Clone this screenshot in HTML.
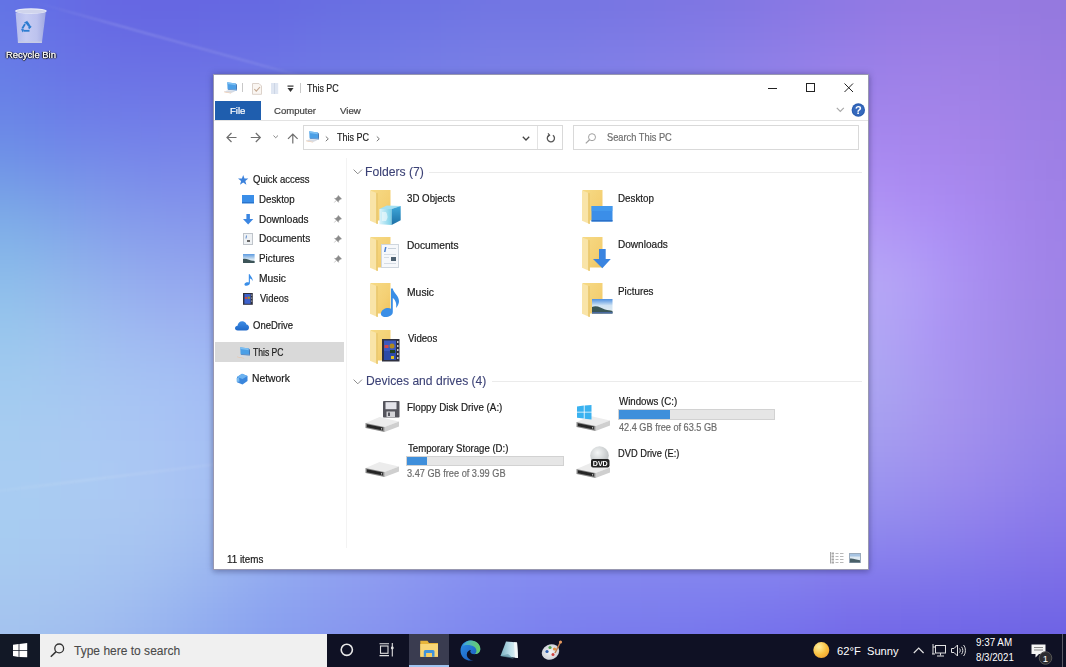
<!DOCTYPE html>
<html><head><meta charset="utf-8"><style>
html,body{margin:0;padding:0;}
body{width:1066px;height:667px;overflow:hidden;position:relative;font-family:"Liberation Sans",sans-serif;background:#8090e8;}
#bg{position:absolute;left:0;top:0;width:1066px;height:667px;overflow:hidden;}
#bgi{position:absolute;left:0;top:0;width:1066px;height:667px;filter:blur(12px);}
#bgi i{position:absolute;width:20px;height:20px;display:block;}
.t{position:absolute;white-space:pre;transform-origin:0 0;-webkit-text-stroke:0.2px currentColor;}
svg{overflow:visible;}
#root{position:absolute;left:0;top:0;width:1066px;height:667px;overflow:hidden;filter:blur(0.35px);}
</style></head><body>
<div id="root"><div id="bg"><div id="bgi"><i style="left:-60px;top:-60px;background:#6373e5"></i><i style="left:-40px;top:-60px;background:#6373e5"></i><i style="left:-20px;top:-60px;background:#6373e5"></i><i style="left:0px;top:-60px;background:#6372e5"></i><i style="left:20px;top:-60px;background:#6370e5"></i><i style="left:40px;top:-60px;background:#646de4"></i><i style="left:60px;top:-60px;background:#646be4"></i><i style="left:80px;top:-60px;background:#6569e3"></i><i style="left:100px;top:-60px;background:#6567e3"></i><i style="left:120px;top:-60px;background:#6566e2"></i><i style="left:140px;top:-60px;background:#6566e2"></i><i style="left:160px;top:-60px;background:#6566e2"></i><i style="left:180px;top:-60px;background:#6566e1"></i><i style="left:200px;top:-60px;background:#6566e1"></i><i style="left:220px;top:-60px;background:#6567e1"></i><i style="left:240px;top:-60px;background:#6568e1"></i><i style="left:260px;top:-60px;background:#6569e1"></i><i style="left:280px;top:-60px;background:#666be2"></i><i style="left:300px;top:-60px;background:#676ce2"></i><i style="left:320px;top:-60px;background:#686de2"></i><i style="left:340px;top:-60px;background:#686ee2"></i><i style="left:360px;top:-60px;background:#6a6fe2"></i><i style="left:380px;top:-60px;background:#6b70e2"></i><i style="left:400px;top:-60px;background:#6c71e2"></i><i style="left:420px;top:-60px;background:#6d72e2"></i><i style="left:440px;top:-60px;background:#6e73e2"></i><i style="left:460px;top:-60px;background:#6f74e2"></i><i style="left:480px;top:-60px;background:#7174e2"></i><i style="left:500px;top:-60px;background:#7275e3"></i><i style="left:520px;top:-60px;background:#7375e3"></i><i style="left:540px;top:-60px;background:#7475e3"></i><i style="left:560px;top:-60px;background:#7575e3"></i><i style="left:580px;top:-60px;background:#7675e3"></i><i style="left:600px;top:-60px;background:#7775e3"></i><i style="left:620px;top:-60px;background:#7975e3"></i><i style="left:640px;top:-60px;background:#7a75e3"></i><i style="left:660px;top:-60px;background:#7c75e3"></i><i style="left:680px;top:-60px;background:#7d75e3"></i><i style="left:700px;top:-60px;background:#7f76e3"></i><i style="left:720px;top:-60px;background:#8176e3"></i><i style="left:740px;top:-60px;background:#8376e3"></i><i style="left:760px;top:-60px;background:#8577e3"></i><i style="left:780px;top:-60px;background:#8777e3"></i><i style="left:800px;top:-60px;background:#8a77e3"></i><i style="left:820px;top:-60px;background:#8c78e3"></i><i style="left:840px;top:-60px;background:#8e78e3"></i><i style="left:860px;top:-60px;background:#9079e3"></i><i style="left:880px;top:-60px;background:#9179e3"></i><i style="left:900px;top:-60px;background:#9379e3"></i><i style="left:920px;top:-60px;background:#9479e2"></i><i style="left:940px;top:-60px;background:#947ae2"></i><i style="left:960px;top:-60px;background:#957ae1"></i><i style="left:980px;top:-60px;background:#9579e1"></i><i style="left:1000px;top:-60px;background:#9579e0"></i><i style="left:1020px;top:-60px;background:#9479df"></i><i style="left:1040px;top:-60px;background:#9478df"></i><i style="left:1060px;top:-60px;background:#9377de"></i><i style="left:1080px;top:-60px;background:#9377de"></i><i style="left:1100px;top:-60px;background:#9377de"></i><i style="left:1120px;top:-60px;background:#9377de"></i><i style="left:-60px;top:-40px;background:#6373e5"></i><i style="left:-40px;top:-40px;background:#6373e5"></i><i style="left:-20px;top:-40px;background:#6373e5"></i><i style="left:0px;top:-40px;background:#6372e5"></i><i style="left:20px;top:-40px;background:#6370e5"></i><i style="left:40px;top:-40px;background:#646de4"></i><i style="left:60px;top:-40px;background:#646be4"></i><i style="left:80px;top:-40px;background:#6569e3"></i><i style="left:100px;top:-40px;background:#6567e3"></i><i style="left:120px;top:-40px;background:#6566e2"></i><i style="left:140px;top:-40px;background:#6566e2"></i><i style="left:160px;top:-40px;background:#6566e2"></i><i style="left:180px;top:-40px;background:#6566e1"></i><i style="left:200px;top:-40px;background:#6566e1"></i><i style="left:220px;top:-40px;background:#6567e1"></i><i style="left:240px;top:-40px;background:#6568e1"></i><i style="left:260px;top:-40px;background:#6569e1"></i><i style="left:280px;top:-40px;background:#666be2"></i><i style="left:300px;top:-40px;background:#676ce2"></i><i style="left:320px;top:-40px;background:#686de2"></i><i style="left:340px;top:-40px;background:#686ee2"></i><i style="left:360px;top:-40px;background:#6a6fe2"></i><i style="left:380px;top:-40px;background:#6b70e2"></i><i style="left:400px;top:-40px;background:#6c71e2"></i><i style="left:420px;top:-40px;background:#6d72e2"></i><i style="left:440px;top:-40px;background:#6e73e2"></i><i style="left:460px;top:-40px;background:#6f74e2"></i><i style="left:480px;top:-40px;background:#7174e2"></i><i style="left:500px;top:-40px;background:#7275e3"></i><i style="left:520px;top:-40px;background:#7375e3"></i><i style="left:540px;top:-40px;background:#7475e3"></i><i style="left:560px;top:-40px;background:#7575e3"></i><i style="left:580px;top:-40px;background:#7675e3"></i><i style="left:600px;top:-40px;background:#7775e3"></i><i style="left:620px;top:-40px;background:#7975e3"></i><i style="left:640px;top:-40px;background:#7a75e3"></i><i style="left:660px;top:-40px;background:#7c75e3"></i><i style="left:680px;top:-40px;background:#7d75e3"></i><i style="left:700px;top:-40px;background:#7f76e3"></i><i style="left:720px;top:-40px;background:#8176e3"></i><i style="left:740px;top:-40px;background:#8376e3"></i><i style="left:760px;top:-40px;background:#8577e3"></i><i style="left:780px;top:-40px;background:#8777e3"></i><i style="left:800px;top:-40px;background:#8a77e3"></i><i style="left:820px;top:-40px;background:#8c78e3"></i><i style="left:840px;top:-40px;background:#8e78e3"></i><i style="left:860px;top:-40px;background:#9079e3"></i><i style="left:880px;top:-40px;background:#9179e3"></i><i style="left:900px;top:-40px;background:#9379e3"></i><i style="left:920px;top:-40px;background:#9479e2"></i><i style="left:940px;top:-40px;background:#947ae2"></i><i style="left:960px;top:-40px;background:#957ae1"></i><i style="left:980px;top:-40px;background:#9579e1"></i><i style="left:1000px;top:-40px;background:#9579e0"></i><i style="left:1020px;top:-40px;background:#9479df"></i><i style="left:1040px;top:-40px;background:#9478df"></i><i style="left:1060px;top:-40px;background:#9377de"></i><i style="left:1080px;top:-40px;background:#9377de"></i><i style="left:1100px;top:-40px;background:#9377de"></i><i style="left:1120px;top:-40px;background:#9377de"></i><i style="left:-60px;top:-20px;background:#6373e5"></i><i style="left:-40px;top:-20px;background:#6373e5"></i><i style="left:-20px;top:-20px;background:#6373e5"></i><i style="left:0px;top:-20px;background:#6372e5"></i><i style="left:20px;top:-20px;background:#6370e5"></i><i style="left:40px;top:-20px;background:#646de4"></i><i style="left:60px;top:-20px;background:#646be4"></i><i style="left:80px;top:-20px;background:#6569e3"></i><i style="left:100px;top:-20px;background:#6567e3"></i><i style="left:120px;top:-20px;background:#6566e2"></i><i style="left:140px;top:-20px;background:#6566e2"></i><i style="left:160px;top:-20px;background:#6566e2"></i><i style="left:180px;top:-20px;background:#6566e1"></i><i style="left:200px;top:-20px;background:#6566e1"></i><i style="left:220px;top:-20px;background:#6567e1"></i><i style="left:240px;top:-20px;background:#6568e1"></i><i style="left:260px;top:-20px;background:#6569e1"></i><i style="left:280px;top:-20px;background:#666be2"></i><i style="left:300px;top:-20px;background:#676ce2"></i><i style="left:320px;top:-20px;background:#686de2"></i><i style="left:340px;top:-20px;background:#686ee2"></i><i style="left:360px;top:-20px;background:#6a6fe2"></i><i style="left:380px;top:-20px;background:#6b70e2"></i><i style="left:400px;top:-20px;background:#6c71e2"></i><i style="left:420px;top:-20px;background:#6d72e2"></i><i style="left:440px;top:-20px;background:#6e73e2"></i><i style="left:460px;top:-20px;background:#6f74e2"></i><i style="left:480px;top:-20px;background:#7174e2"></i><i style="left:500px;top:-20px;background:#7275e3"></i><i style="left:520px;top:-20px;background:#7375e3"></i><i style="left:540px;top:-20px;background:#7475e3"></i><i style="left:560px;top:-20px;background:#7575e3"></i><i style="left:580px;top:-20px;background:#7675e3"></i><i style="left:600px;top:-20px;background:#7775e3"></i><i style="left:620px;top:-20px;background:#7975e3"></i><i style="left:640px;top:-20px;background:#7a75e3"></i><i style="left:660px;top:-20px;background:#7c75e3"></i><i style="left:680px;top:-20px;background:#7d75e3"></i><i style="left:700px;top:-20px;background:#7f76e3"></i><i style="left:720px;top:-20px;background:#8176e3"></i><i style="left:740px;top:-20px;background:#8376e3"></i><i style="left:760px;top:-20px;background:#8577e3"></i><i style="left:780px;top:-20px;background:#8777e3"></i><i style="left:800px;top:-20px;background:#8a77e3"></i><i style="left:820px;top:-20px;background:#8c78e3"></i><i style="left:840px;top:-20px;background:#8e78e3"></i><i style="left:860px;top:-20px;background:#9079e3"></i><i style="left:880px;top:-20px;background:#9179e3"></i><i style="left:900px;top:-20px;background:#9379e3"></i><i style="left:920px;top:-20px;background:#9479e2"></i><i style="left:940px;top:-20px;background:#947ae2"></i><i style="left:960px;top:-20px;background:#957ae1"></i><i style="left:980px;top:-20px;background:#9579e1"></i><i style="left:1000px;top:-20px;background:#9579e0"></i><i style="left:1020px;top:-20px;background:#9479df"></i><i style="left:1040px;top:-20px;background:#9478df"></i><i style="left:1060px;top:-20px;background:#9377de"></i><i style="left:1080px;top:-20px;background:#9377de"></i><i style="left:1100px;top:-20px;background:#9377de"></i><i style="left:1120px;top:-20px;background:#9377de"></i><i style="left:-60px;top:0px;background:#6375e6"></i><i style="left:-40px;top:0px;background:#6375e6"></i><i style="left:-20px;top:0px;background:#6375e6"></i><i style="left:0px;top:0px;background:#6373e5"></i><i style="left:20px;top:0px;background:#6471e5"></i><i style="left:40px;top:0px;background:#646ee5"></i><i style="left:60px;top:0px;background:#656ce4"></i><i style="left:80px;top:0px;background:#666ae3"></i><i style="left:100px;top:0px;background:#6669e3"></i><i style="left:120px;top:0px;background:#6668e3"></i><i style="left:140px;top:0px;background:#6667e2"></i><i style="left:160px;top:0px;background:#6667e2"></i><i style="left:180px;top:0px;background:#6667e2"></i><i style="left:200px;top:0px;background:#6668e2"></i><i style="left:220px;top:0px;background:#6669e2"></i><i style="left:240px;top:0px;background:#666ae2"></i><i style="left:260px;top:0px;background:#666be2"></i><i style="left:280px;top:0px;background:#676ce2"></i><i style="left:300px;top:0px;background:#686de2"></i><i style="left:320px;top:0px;background:#696fe2"></i><i style="left:340px;top:0px;background:#6a70e2"></i><i style="left:360px;top:0px;background:#6b71e2"></i><i style="left:380px;top:0px;background:#6c72e3"></i><i style="left:400px;top:0px;background:#6d73e3"></i><i style="left:420px;top:0px;background:#6e74e3"></i><i style="left:440px;top:0px;background:#6f75e3"></i><i style="left:460px;top:0px;background:#7175e3"></i><i style="left:480px;top:0px;background:#7276e3"></i><i style="left:500px;top:0px;background:#7376e3"></i><i style="left:520px;top:0px;background:#7476e3"></i><i style="left:540px;top:0px;background:#7576e3"></i><i style="left:560px;top:0px;background:#7676e3"></i><i style="left:580px;top:0px;background:#7776e3"></i><i style="left:600px;top:0px;background:#7876e3"></i><i style="left:620px;top:0px;background:#7a76e3"></i><i style="left:640px;top:0px;background:#7b76e3"></i><i style="left:660px;top:0px;background:#7d76e3"></i><i style="left:680px;top:0px;background:#7f77e3"></i><i style="left:700px;top:0px;background:#8077e3"></i><i style="left:720px;top:0px;background:#8277e3"></i><i style="left:740px;top:0px;background:#8477e3"></i><i style="left:760px;top:0px;background:#8678e4"></i><i style="left:780px;top:0px;background:#8978e4"></i><i style="left:800px;top:0px;background:#8b79e4"></i><i style="left:820px;top:0px;background:#8d79e4"></i><i style="left:840px;top:0px;background:#8f79e4"></i><i style="left:860px;top:0px;background:#917ae4"></i><i style="left:880px;top:0px;background:#937ae3"></i><i style="left:900px;top:0px;background:#947ae3"></i><i style="left:920px;top:0px;background:#957ae3"></i><i style="left:940px;top:0px;background:#967be2"></i><i style="left:960px;top:0px;background:#967be2"></i><i style="left:980px;top:0px;background:#967ae1"></i><i style="left:1000px;top:0px;background:#967ae1"></i><i style="left:1020px;top:0px;background:#9579e0"></i><i style="left:1040px;top:0px;background:#9579df"></i><i style="left:1060px;top:0px;background:#9478de"></i><i style="left:1080px;top:0px;background:#9478de"></i><i style="left:1100px;top:0px;background:#9478de"></i><i style="left:1120px;top:0px;background:#9478de"></i><i style="left:-60px;top:20px;background:#6477e6"></i><i style="left:-40px;top:20px;background:#6477e6"></i><i style="left:-20px;top:20px;background:#6477e6"></i><i style="left:0px;top:20px;background:#6576e6"></i><i style="left:20px;top:20px;background:#6574e6"></i><i style="left:40px;top:20px;background:#6671e5"></i><i style="left:60px;top:20px;background:#666fe5"></i><i style="left:80px;top:20px;background:#676de4"></i><i style="left:100px;top:20px;background:#676be4"></i><i style="left:120px;top:20px;background:#676ae3"></i><i style="left:140px;top:20px;background:#676ae3"></i><i style="left:160px;top:20px;background:#676ae3"></i><i style="left:180px;top:20px;background:#676ae3"></i><i style="left:200px;top:20px;background:#676be3"></i><i style="left:220px;top:20px;background:#686ce3"></i><i style="left:240px;top:20px;background:#686de3"></i><i style="left:260px;top:20px;background:#686ee3"></i><i style="left:280px;top:20px;background:#696fe3"></i><i style="left:300px;top:20px;background:#6a71e3"></i><i style="left:320px;top:20px;background:#6b72e3"></i><i style="left:340px;top:20px;background:#6c73e3"></i><i style="left:360px;top:20px;background:#6d74e3"></i><i style="left:380px;top:20px;background:#6e75e4"></i><i style="left:400px;top:20px;background:#6f76e4"></i><i style="left:420px;top:20px;background:#7077e4"></i><i style="left:440px;top:20px;background:#7278e4"></i><i style="left:460px;top:20px;background:#7378e4"></i><i style="left:480px;top:20px;background:#7479e4"></i><i style="left:500px;top:20px;background:#7579e4"></i><i style="left:520px;top:20px;background:#7679e4"></i><i style="left:540px;top:20px;background:#7779e4"></i><i style="left:560px;top:20px;background:#7879e4"></i><i style="left:580px;top:20px;background:#7a79e4"></i><i style="left:600px;top:20px;background:#7b79e4"></i><i style="left:620px;top:20px;background:#7c79e4"></i><i style="left:640px;top:20px;background:#7e79e4"></i><i style="left:660px;top:20px;background:#8079e5"></i><i style="left:680px;top:20px;background:#8179e5"></i><i style="left:700px;top:20px;background:#837ae5"></i><i style="left:720px;top:20px;background:#857ae5"></i><i style="left:740px;top:20px;background:#877ae5"></i><i style="left:760px;top:20px;background:#897ae5"></i><i style="left:780px;top:20px;background:#8c7be5"></i><i style="left:800px;top:20px;background:#8e7be5"></i><i style="left:820px;top:20px;background:#907be5"></i><i style="left:840px;top:20px;background:#927be5"></i><i style="left:860px;top:20px;background:#947ce5"></i><i style="left:880px;top:20px;background:#967ce5"></i><i style="left:900px;top:20px;background:#977ce5"></i><i style="left:920px;top:20px;background:#987ce4"></i><i style="left:940px;top:20px;background:#987ce4"></i><i style="left:960px;top:20px;background:#997ce3"></i><i style="left:980px;top:20px;background:#997ce2"></i><i style="left:1000px;top:20px;background:#987ce2"></i><i style="left:1020px;top:20px;background:#977be1"></i><i style="left:1040px;top:20px;background:#967ae0"></i><i style="left:1060px;top:20px;background:#9679df"></i><i style="left:1080px;top:20px;background:#9679df"></i><i style="left:1100px;top:20px;background:#9679df"></i><i style="left:1120px;top:20px;background:#9679df"></i><i style="left:-60px;top:40px;background:#667ae6"></i><i style="left:-40px;top:40px;background:#667ae6"></i><i style="left:-20px;top:40px;background:#667ae6"></i><i style="left:0px;top:40px;background:#6679e6"></i><i style="left:20px;top:40px;background:#6676e6"></i><i style="left:40px;top:40px;background:#6774e6"></i><i style="left:60px;top:40px;background:#6872e5"></i><i style="left:80px;top:40px;background:#6870e5"></i><i style="left:100px;top:40px;background:#696fe5"></i><i style="left:120px;top:40px;background:#696ee4"></i><i style="left:140px;top:40px;background:#696de4"></i><i style="left:160px;top:40px;background:#696de4"></i><i style="left:180px;top:40px;background:#696de4"></i><i style="left:200px;top:40px;background:#6a6ee3"></i><i style="left:220px;top:40px;background:#6a6fe4"></i><i style="left:240px;top:40px;background:#6a70e4"></i><i style="left:260px;top:40px;background:#6b71e4"></i><i style="left:280px;top:40px;background:#6b72e4"></i><i style="left:300px;top:40px;background:#6c74e4"></i><i style="left:320px;top:40px;background:#6d75e4"></i><i style="left:340px;top:40px;background:#6e76e4"></i><i style="left:360px;top:40px;background:#6f77e4"></i><i style="left:380px;top:40px;background:#7078e5"></i><i style="left:400px;top:40px;background:#7279e5"></i><i style="left:420px;top:40px;background:#737ae5"></i><i style="left:440px;top:40px;background:#747be5"></i><i style="left:460px;top:40px;background:#757be5"></i><i style="left:480px;top:40px;background:#777ce5"></i><i style="left:500px;top:40px;background:#787ce5"></i><i style="left:520px;top:40px;background:#797ce5"></i><i style="left:540px;top:40px;background:#7a7ce5"></i><i style="left:560px;top:40px;background:#7b7ce5"></i><i style="left:580px;top:40px;background:#7c7ce5"></i><i style="left:600px;top:40px;background:#7e7ce6"></i><i style="left:620px;top:40px;background:#7f7ce6"></i><i style="left:640px;top:40px;background:#817ce6"></i><i style="left:660px;top:40px;background:#827ce6"></i><i style="left:680px;top:40px;background:#847ce6"></i><i style="left:700px;top:40px;background:#867de6"></i><i style="left:720px;top:40px;background:#887de6"></i><i style="left:740px;top:40px;background:#8a7de6"></i><i style="left:760px;top:40px;background:#8c7de6"></i><i style="left:780px;top:40px;background:#8f7de6"></i><i style="left:800px;top:40px;background:#917de7"></i><i style="left:820px;top:40px;background:#937ee7"></i><i style="left:840px;top:40px;background:#957ee7"></i><i style="left:860px;top:40px;background:#977ee6"></i><i style="left:880px;top:40px;background:#997ee6"></i><i style="left:900px;top:40px;background:#9a7ee6"></i><i style="left:920px;top:40px;background:#9b7ee5"></i><i style="left:940px;top:40px;background:#9b7ee5"></i><i style="left:960px;top:40px;background:#9b7ee4"></i><i style="left:980px;top:40px;background:#9b7ee4"></i><i style="left:1000px;top:40px;background:#9a7de3"></i><i style="left:1020px;top:40px;background:#997ce2"></i><i style="left:1040px;top:40px;background:#987be1"></i><i style="left:1060px;top:40px;background:#977be0"></i><i style="left:1080px;top:40px;background:#977be0"></i><i style="left:1100px;top:40px;background:#977be0"></i><i style="left:1120px;top:40px;background:#977be0"></i><i style="left:-60px;top:60px;background:#677ee7"></i><i style="left:-40px;top:60px;background:#677ee7"></i><i style="left:-20px;top:60px;background:#677ee7"></i><i style="left:0px;top:60px;background:#677ce7"></i><i style="left:20px;top:60px;background:#677ae6"></i><i style="left:40px;top:60px;background:#6877e6"></i><i style="left:60px;top:60px;background:#6975e6"></i><i style="left:80px;top:60px;background:#6a74e6"></i><i style="left:100px;top:60px;background:#6a72e6"></i><i style="left:120px;top:60px;background:#6b72e5"></i><i style="left:140px;top:60px;background:#6b71e5"></i><i style="left:160px;top:60px;background:#6c71e5"></i><i style="left:180px;top:60px;background:#6c71e5"></i><i style="left:200px;top:60px;background:#6c72e5"></i><i style="left:220px;top:60px;background:#6c72e5"></i><i style="left:240px;top:60px;background:#6d73e5"></i><i style="left:260px;top:60px;background:#6d75e5"></i><i style="left:280px;top:60px;background:#6e76e5"></i><i style="left:300px;top:60px;background:#6f77e5"></i><i style="left:320px;top:60px;background:#7078e5"></i><i style="left:340px;top:60px;background:#7179e5"></i><i style="left:360px;top:60px;background:#727ae5"></i><i style="left:380px;top:60px;background:#737be6"></i><i style="left:400px;top:60px;background:#747ce6"></i><i style="left:420px;top:60px;background:#757de6"></i><i style="left:440px;top:60px;background:#777ee6"></i><i style="left:460px;top:60px;background:#787ee6"></i><i style="left:480px;top:60px;background:#797ee6"></i><i style="left:500px;top:60px;background:#7a7fe6"></i><i style="left:520px;top:60px;background:#7b7fe6"></i><i style="left:540px;top:60px;background:#7c7fe6"></i><i style="left:560px;top:60px;background:#7e7fe6"></i><i style="left:580px;top:60px;background:#7f7fe7"></i><i style="left:600px;top:60px;background:#807fe7"></i><i style="left:620px;top:60px;background:#827fe7"></i><i style="left:640px;top:60px;background:#847fe7"></i><i style="left:660px;top:60px;background:#867fe7"></i><i style="left:680px;top:60px;background:#877fe7"></i><i style="left:700px;top:60px;background:#8980e7"></i><i style="left:720px;top:60px;background:#8b80e8"></i><i style="left:740px;top:60px;background:#8d80e8"></i><i style="left:760px;top:60px;background:#9080e8"></i><i style="left:780px;top:60px;background:#9280e8"></i><i style="left:800px;top:60px;background:#9480e8"></i><i style="left:820px;top:60px;background:#9780e8"></i><i style="left:840px;top:60px;background:#9980e8"></i><i style="left:860px;top:60px;background:#9a80e8"></i><i style="left:880px;top:60px;background:#9c80e8"></i><i style="left:900px;top:60px;background:#9d80e7"></i><i style="left:920px;top:60px;background:#9d80e7"></i><i style="left:940px;top:60px;background:#9e80e6"></i><i style="left:960px;top:60px;background:#9d7fe5"></i><i style="left:980px;top:60px;background:#9d7fe5"></i><i style="left:1000px;top:60px;background:#9c7ee4"></i><i style="left:1020px;top:60px;background:#9b7de3"></i><i style="left:1040px;top:60px;background:#997ce2"></i><i style="left:1060px;top:60px;background:#987be1"></i><i style="left:1080px;top:60px;background:#987be1"></i><i style="left:1100px;top:60px;background:#987be1"></i><i style="left:1120px;top:60px;background:#987be1"></i><i style="left:-60px;top:80px;background:#6881e7"></i><i style="left:-40px;top:80px;background:#6881e7"></i><i style="left:-20px;top:80px;background:#6881e7"></i><i style="left:0px;top:80px;background:#6880e7"></i><i style="left:20px;top:80px;background:#697de7"></i><i style="left:40px;top:80px;background:#6a7be7"></i><i style="left:60px;top:80px;background:#6b79e7"></i><i style="left:80px;top:80px;background:#6b78e7"></i><i style="left:100px;top:80px;background:#6c77e7"></i><i style="left:120px;top:80px;background:#6d76e6"></i><i style="left:140px;top:80px;background:#6e75e6"></i><i style="left:160px;top:80px;background:#6e75e6"></i><i style="left:180px;top:80px;background:#6e75e6"></i><i style="left:200px;top:80px;background:#6f76e6"></i><i style="left:220px;top:80px;background:#6f76e6"></i><i style="left:240px;top:80px;background:#7077e6"></i><i style="left:260px;top:80px;background:#7078e6"></i><i style="left:280px;top:80px;background:#7179e6"></i><i style="left:300px;top:80px;background:#727be6"></i><i style="left:320px;top:80px;background:#737ce6"></i><i style="left:340px;top:80px;background:#747de6"></i><i style="left:360px;top:80px;background:#757ee6"></i><i style="left:380px;top:80px;background:#767ee7"></i><i style="left:400px;top:80px;background:#777fe7"></i><i style="left:420px;top:80px;background:#7880e7"></i><i style="left:440px;top:80px;background:#7981e7"></i><i style="left:460px;top:80px;background:#7a81e7"></i><i style="left:480px;top:80px;background:#7c81e7"></i><i style="left:500px;top:80px;background:#7d82e7"></i><i style="left:520px;top:80px;background:#7e82e7"></i><i style="left:540px;top:80px;background:#7f82e7"></i><i style="left:560px;top:80px;background:#8082e8"></i><i style="left:580px;top:80px;background:#8282e8"></i><i style="left:600px;top:80px;background:#8382e8"></i><i style="left:620px;top:80px;background:#8582e8"></i><i style="left:640px;top:80px;background:#8782e8"></i><i style="left:660px;top:80px;background:#8982e8"></i><i style="left:680px;top:80px;background:#8b83e9"></i><i style="left:700px;top:80px;background:#8d83e9"></i><i style="left:720px;top:80px;background:#8f83e9"></i><i style="left:740px;top:80px;background:#9183e9"></i><i style="left:760px;top:80px;background:#9383e9"></i><i style="left:780px;top:80px;background:#9683ea"></i><i style="left:800px;top:80px;background:#9883ea"></i><i style="left:820px;top:80px;background:#9a83ea"></i><i style="left:840px;top:80px;background:#9c82ea"></i><i style="left:860px;top:80px;background:#9d82ea"></i><i style="left:880px;top:80px;background:#9f82e9"></i><i style="left:900px;top:80px;background:#9f82e9"></i><i style="left:920px;top:80px;background:#a082e8"></i><i style="left:940px;top:80px;background:#a081e7"></i><i style="left:960px;top:80px;background:#9f81e7"></i><i style="left:980px;top:80px;background:#9f80e6"></i><i style="left:1000px;top:80px;background:#9d7fe5"></i><i style="left:1020px;top:80px;background:#9c7ee4"></i><i style="left:1040px;top:80px;background:#9b7de3"></i><i style="left:1060px;top:80px;background:#9a7ce2"></i><i style="left:1080px;top:80px;background:#9a7ce2"></i><i style="left:1100px;top:80px;background:#9a7ce2"></i><i style="left:1120px;top:80px;background:#9a7ce2"></i><i style="left:-60px;top:100px;background:#6a85e7"></i><i style="left:-40px;top:100px;background:#6a85e7"></i><i style="left:-20px;top:100px;background:#6a85e7"></i><i style="left:0px;top:100px;background:#6a84e7"></i><i style="left:20px;top:100px;background:#6a82e7"></i><i style="left:40px;top:100px;background:#6b80e7"></i><i style="left:60px;top:100px;background:#6c7ee7"></i><i style="left:80px;top:100px;background:#6e7de7"></i><i style="left:100px;top:100px;background:#6f7be7"></i><i style="left:120px;top:100px;background:#6f7be8"></i><i style="left:140px;top:100px;background:#707ae7"></i><i style="left:160px;top:100px;background:#717ae7"></i><i style="left:180px;top:100px;background:#717ae7"></i><i style="left:200px;top:100px;background:#727ae7"></i><i style="left:220px;top:100px;background:#727be7"></i><i style="left:240px;top:100px;background:#737be7"></i><i style="left:260px;top:100px;background:#737ce7"></i><i style="left:280px;top:100px;background:#747de7"></i><i style="left:300px;top:100px;background:#757ee7"></i><i style="left:320px;top:100px;background:#767fe7"></i><i style="left:340px;top:100px;background:#7780e7"></i><i style="left:360px;top:100px;background:#7881e7"></i><i style="left:380px;top:100px;background:#7982e8"></i><i style="left:400px;top:100px;background:#7a82e8"></i><i style="left:420px;top:100px;background:#7b83e8"></i><i style="left:440px;top:100px;background:#7c84e8"></i><i style="left:460px;top:100px;background:#7d84e8"></i><i style="left:480px;top:100px;background:#7e84e8"></i><i style="left:500px;top:100px;background:#7f85e8"></i><i style="left:520px;top:100px;background:#8185e8"></i><i style="left:540px;top:100px;background:#8285e9"></i><i style="left:560px;top:100px;background:#8385e9"></i><i style="left:580px;top:100px;background:#8585e9"></i><i style="left:600px;top:100px;background:#8685e9"></i><i style="left:620px;top:100px;background:#8885e9"></i><i style="left:640px;top:100px;background:#8a86e9"></i><i style="left:660px;top:100px;background:#8c86ea"></i><i style="left:680px;top:100px;background:#8e86ea"></i><i style="left:700px;top:100px;background:#9086ea"></i><i style="left:720px;top:100px;background:#9286eb"></i><i style="left:740px;top:100px;background:#9586eb"></i><i style="left:760px;top:100px;background:#9786eb"></i><i style="left:780px;top:100px;background:#9986eb"></i><i style="left:800px;top:100px;background:#9b86ec"></i><i style="left:820px;top:100px;background:#9d85ec"></i><i style="left:840px;top:100px;background:#9f85ec"></i><i style="left:860px;top:100px;background:#a184eb"></i><i style="left:880px;top:100px;background:#a184eb"></i><i style="left:900px;top:100px;background:#a283ea"></i><i style="left:920px;top:100px;background:#a283e9"></i><i style="left:940px;top:100px;background:#a283e9"></i><i style="left:960px;top:100px;background:#a182e8"></i><i style="left:980px;top:100px;background:#a081e7"></i><i style="left:1000px;top:100px;background:#9f80e6"></i><i style="left:1020px;top:100px;background:#9d7fe5"></i><i style="left:1040px;top:100px;background:#9c7ee4"></i><i style="left:1060px;top:100px;background:#9b7de3"></i><i style="left:1080px;top:100px;background:#9b7de3"></i><i style="left:1100px;top:100px;background:#9b7de3"></i><i style="left:1120px;top:100px;background:#9b7de3"></i><i style="left:-60px;top:120px;background:#6c8ae7"></i><i style="left:-40px;top:120px;background:#6c8ae7"></i><i style="left:-20px;top:120px;background:#6c8ae7"></i><i style="left:0px;top:120px;background:#6c89e7"></i><i style="left:20px;top:120px;background:#6c87e7"></i><i style="left:40px;top:120px;background:#6d85e8"></i><i style="left:60px;top:120px;background:#6f83e8"></i><i style="left:80px;top:120px;background:#7082e8"></i><i style="left:100px;top:120px;background:#7181e8"></i><i style="left:120px;top:120px;background:#7280e8"></i><i style="left:140px;top:120px;background:#737fe9"></i><i style="left:160px;top:120px;background:#747fe8"></i><i style="left:180px;top:120px;background:#747fe8"></i><i style="left:200px;top:120px;background:#757fe8"></i><i style="left:220px;top:120px;background:#767fe8"></i><i style="left:240px;top:120px;background:#7680e8"></i><i style="left:260px;top:120px;background:#7781e8"></i><i style="left:280px;top:120px;background:#7781e8"></i><i style="left:300px;top:120px;background:#7882e8"></i><i style="left:320px;top:120px;background:#7983e8"></i><i style="left:340px;top:120px;background:#7a84e8"></i><i style="left:360px;top:120px;background:#7a84e8"></i><i style="left:380px;top:120px;background:#7b85e9"></i><i style="left:400px;top:120px;background:#7c86e9"></i><i style="left:420px;top:120px;background:#7e86e9"></i><i style="left:440px;top:120px;background:#7f87e9"></i><i style="left:460px;top:120px;background:#8087e9"></i><i style="left:480px;top:120px;background:#8187e9"></i><i style="left:500px;top:120px;background:#8288e9"></i><i style="left:520px;top:120px;background:#8388e9"></i><i style="left:540px;top:120px;background:#8588ea"></i><i style="left:560px;top:120px;background:#8688ea"></i><i style="left:580px;top:120px;background:#8888ea"></i><i style="left:600px;top:120px;background:#8989ea"></i><i style="left:620px;top:120px;background:#8b89ea"></i><i style="left:640px;top:120px;background:#8d89eb"></i><i style="left:660px;top:120px;background:#8f89eb"></i><i style="left:680px;top:120px;background:#918aeb"></i><i style="left:700px;top:120px;background:#948aec"></i><i style="left:720px;top:120px;background:#968aec"></i><i style="left:740px;top:120px;background:#988aec"></i><i style="left:760px;top:120px;background:#9b8aed"></i><i style="left:780px;top:120px;background:#9d8aed"></i><i style="left:800px;top:120px;background:#9f89ed"></i><i style="left:820px;top:120px;background:#a188ed"></i><i style="left:840px;top:120px;background:#a288ed"></i><i style="left:860px;top:120px;background:#a487ed"></i><i style="left:880px;top:120px;background:#a486ed"></i><i style="left:900px;top:120px;background:#a585ec"></i><i style="left:920px;top:120px;background:#a485eb"></i><i style="left:940px;top:120px;background:#a484ea"></i><i style="left:960px;top:120px;background:#a383e9"></i><i style="left:980px;top:120px;background:#a282e8"></i><i style="left:1000px;top:120px;background:#a081e7"></i><i style="left:1020px;top:120px;background:#9e80e6"></i><i style="left:1040px;top:120px;background:#9d7fe5"></i><i style="left:1060px;top:120px;background:#9b7ee4"></i><i style="left:1080px;top:120px;background:#9b7ee4"></i><i style="left:1100px;top:120px;background:#9b7ee4"></i><i style="left:1120px;top:120px;background:#9b7ee4"></i><i style="left:-60px;top:140px;background:#6e90e7"></i><i style="left:-40px;top:140px;background:#6e90e7"></i><i style="left:-20px;top:140px;background:#6e90e7"></i><i style="left:0px;top:140px;background:#6e8fe7"></i><i style="left:20px;top:140px;background:#6f8de8"></i><i style="left:40px;top:140px;background:#708be8"></i><i style="left:60px;top:140px;background:#7289e8"></i><i style="left:80px;top:140px;background:#7388e8"></i><i style="left:100px;top:140px;background:#7487e9"></i><i style="left:120px;top:140px;background:#7685e9"></i><i style="left:140px;top:140px;background:#7685e9"></i><i style="left:160px;top:140px;background:#7784e9"></i><i style="left:180px;top:140px;background:#7884e9"></i><i style="left:200px;top:140px;background:#7884e9"></i><i style="left:220px;top:140px;background:#7984e9"></i><i style="left:240px;top:140px;background:#7a84e9"></i><i style="left:260px;top:140px;background:#7a85e9"></i><i style="left:280px;top:140px;background:#7b85e9"></i><i style="left:300px;top:140px;background:#7b86e9"></i><i style="left:320px;top:140px;background:#7c87e9"></i><i style="left:340px;top:140px;background:#7d87e9"></i><i style="left:360px;top:140px;background:#7e88e9"></i><i style="left:380px;top:140px;background:#7e88ea"></i><i style="left:400px;top:140px;background:#7f89ea"></i><i style="left:420px;top:140px;background:#8089ea"></i><i style="left:440px;top:140px;background:#818aea"></i><i style="left:460px;top:140px;background:#828aea"></i><i style="left:480px;top:140px;background:#848aea"></i><i style="left:500px;top:140px;background:#858bea"></i><i style="left:520px;top:140px;background:#868beb"></i><i style="left:540px;top:140px;background:#878beb"></i><i style="left:560px;top:140px;background:#898beb"></i><i style="left:580px;top:140px;background:#8b8ceb"></i><i style="left:600px;top:140px;background:#8c8ceb"></i><i style="left:620px;top:140px;background:#8e8cec"></i><i style="left:640px;top:140px;background:#908dec"></i><i style="left:660px;top:140px;background:#928dec"></i><i style="left:680px;top:140px;background:#958ded"></i><i style="left:700px;top:140px;background:#978ded"></i><i style="left:720px;top:140px;background:#998eed"></i><i style="left:740px;top:140px;background:#9c8eee"></i><i style="left:760px;top:140px;background:#9e8dee"></i><i style="left:780px;top:140px;background:#a08def"></i><i style="left:800px;top:140px;background:#a28def"></i><i style="left:820px;top:140px;background:#a48cef"></i><i style="left:840px;top:140px;background:#a68bef"></i><i style="left:860px;top:140px;background:#a789ef"></i><i style="left:880px;top:140px;background:#a788ef"></i><i style="left:900px;top:140px;background:#a787ee"></i><i style="left:920px;top:140px;background:#a686ed"></i><i style="left:940px;top:140px;background:#a685ec"></i><i style="left:960px;top:140px;background:#a484ea"></i><i style="left:980px;top:140px;background:#a383e9"></i><i style="left:1000px;top:140px;background:#a182e8"></i><i style="left:1020px;top:140px;background:#9f81e7"></i><i style="left:1040px;top:140px;background:#9e80e5"></i><i style="left:1060px;top:140px;background:#9c7ee4"></i><i style="left:1080px;top:140px;background:#9c7ee4"></i><i style="left:1100px;top:140px;background:#9c7ee4"></i><i style="left:1120px;top:140px;background:#9c7ee4"></i><i style="left:-60px;top:160px;background:#7298e7"></i><i style="left:-40px;top:160px;background:#7298e7"></i><i style="left:-20px;top:160px;background:#7298e7"></i><i style="left:0px;top:160px;background:#7296e7"></i><i style="left:20px;top:160px;background:#7394e8"></i><i style="left:40px;top:160px;background:#7492e8"></i><i style="left:60px;top:160px;background:#7590e8"></i><i style="left:80px;top:160px;background:#778fe9"></i><i style="left:100px;top:160px;background:#788de9"></i><i style="left:120px;top:160px;background:#798cea"></i><i style="left:140px;top:160px;background:#7a8aea"></i><i style="left:160px;top:160px;background:#7b8aea"></i><i style="left:180px;top:160px;background:#7b89ea"></i><i style="left:200px;top:160px;background:#7c89ea"></i><i style="left:220px;top:160px;background:#7d89ea"></i><i style="left:240px;top:160px;background:#7d89ea"></i><i style="left:260px;top:160px;background:#7e89ea"></i><i style="left:280px;top:160px;background:#7e8aea"></i><i style="left:300px;top:160px;background:#7f8aea"></i><i style="left:320px;top:160px;background:#7f8bea"></i><i style="left:340px;top:160px;background:#808bea"></i><i style="left:360px;top:160px;background:#818bea"></i><i style="left:380px;top:160px;background:#818ceb"></i><i style="left:400px;top:160px;background:#828ceb"></i><i style="left:420px;top:160px;background:#838ceb"></i><i style="left:440px;top:160px;background:#848deb"></i><i style="left:460px;top:160px;background:#858deb"></i><i style="left:480px;top:160px;background:#868deb"></i><i style="left:500px;top:160px;background:#878eeb"></i><i style="left:520px;top:160px;background:#898eeb"></i><i style="left:540px;top:160px;background:#8a8eec"></i><i style="left:560px;top:160px;background:#8c8eec"></i><i style="left:580px;top:160px;background:#8d8fec"></i><i style="left:600px;top:160px;background:#8f8fec"></i><i style="left:620px;top:160px;background:#918fed"></i><i style="left:640px;top:160px;background:#9390ed"></i><i style="left:660px;top:160px;background:#9590ed"></i><i style="left:680px;top:160px;background:#9891ee"></i><i style="left:700px;top:160px;background:#9a91ee"></i><i style="left:720px;top:160px;background:#9d91ef"></i><i style="left:740px;top:160px;background:#9f91ef"></i><i style="left:760px;top:160px;background:#a191f0"></i><i style="left:780px;top:160px;background:#a491f0"></i><i style="left:800px;top:160px;background:#a690f0"></i><i style="left:820px;top:160px;background:#a78ff1"></i><i style="left:840px;top:160px;background:#a98ef1"></i><i style="left:860px;top:160px;background:#aa8cf1"></i><i style="left:880px;top:160px;background:#aa8bf1"></i><i style="left:900px;top:160px;background:#a989f0"></i><i style="left:920px;top:160px;background:#a888ef"></i><i style="left:940px;top:160px;background:#a787ee"></i><i style="left:960px;top:160px;background:#a686ec"></i><i style="left:980px;top:160px;background:#a485eb"></i><i style="left:1000px;top:160px;background:#a283e9"></i><i style="left:1020px;top:160px;background:#a082e8"></i><i style="left:1040px;top:160px;background:#9e80e6"></i><i style="left:1060px;top:160px;background:#9d7fe5"></i><i style="left:1080px;top:160px;background:#9d7fe5"></i><i style="left:1100px;top:160px;background:#9d7fe5"></i><i style="left:1120px;top:160px;background:#9d7fe5"></i><i style="left:-60px;top:180px;background:#769fe7"></i><i style="left:-40px;top:180px;background:#769fe7"></i><i style="left:-20px;top:180px;background:#769fe7"></i><i style="left:0px;top:180px;background:#769ee7"></i><i style="left:20px;top:180px;background:#779ce8"></i><i style="left:40px;top:180px;background:#789ae8"></i><i style="left:60px;top:180px;background:#7998e9"></i><i style="left:80px;top:180px;background:#7b96e9"></i><i style="left:100px;top:180px;background:#7c94ea"></i><i style="left:120px;top:180px;background:#7d92ea"></i><i style="left:140px;top:180px;background:#7e90ea"></i><i style="left:160px;top:180px;background:#7f8feb"></i><i style="left:180px;top:180px;background:#7f8feb"></i><i style="left:200px;top:180px;background:#808eeb"></i><i style="left:220px;top:180px;background:#808eeb"></i><i style="left:240px;top:180px;background:#818eeb"></i><i style="left:260px;top:180px;background:#818eeb"></i><i style="left:280px;top:180px;background:#828eeb"></i><i style="left:300px;top:180px;background:#828eeb"></i><i style="left:320px;top:180px;background:#838eeb"></i><i style="left:340px;top:180px;background:#838feb"></i><i style="left:360px;top:180px;background:#848feb"></i><i style="left:380px;top:180px;background:#848feb"></i><i style="left:400px;top:180px;background:#858fec"></i><i style="left:420px;top:180px;background:#8690ec"></i><i style="left:440px;top:180px;background:#8790ec"></i><i style="left:460px;top:180px;background:#8890ec"></i><i style="left:480px;top:180px;background:#8990ec"></i><i style="left:500px;top:180px;background:#8a90ec"></i><i style="left:520px;top:180px;background:#8b91ec"></i><i style="left:540px;top:180px;background:#8d91ed"></i><i style="left:560px;top:180px;background:#8e91ed"></i><i style="left:580px;top:180px;background:#9092ed"></i><i style="left:600px;top:180px;background:#9292ed"></i><i style="left:620px;top:180px;background:#9493ee"></i><i style="left:640px;top:180px;background:#9693ee"></i><i style="left:660px;top:180px;background:#9894ee"></i><i style="left:680px;top:180px;background:#9b94ef"></i><i style="left:700px;top:180px;background:#9d95ef"></i><i style="left:720px;top:180px;background:#9f95f0"></i><i style="left:740px;top:180px;background:#a295f0"></i><i style="left:760px;top:180px;background:#a495f1"></i><i style="left:780px;top:180px;background:#a795f1"></i><i style="left:800px;top:180px;background:#a994f2"></i><i style="left:820px;top:180px;background:#aa93f2"></i><i style="left:840px;top:180px;background:#ac92f3"></i><i style="left:860px;top:180px;background:#ac90f3"></i><i style="left:880px;top:180px;background:#ac8ef3"></i><i style="left:900px;top:180px;background:#ab8cf2"></i><i style="left:920px;top:180px;background:#aa8bf1"></i><i style="left:940px;top:180px;background:#a889f0"></i><i style="left:960px;top:180px;background:#a787ee"></i><i style="left:980px;top:180px;background:#a586ec"></i><i style="left:1000px;top:180px;background:#a384ea"></i><i style="left:1020px;top:180px;background:#a183e9"></i><i style="left:1040px;top:180px;background:#9f81e7"></i><i style="left:1060px;top:180px;background:#9e80e6"></i><i style="left:1080px;top:180px;background:#9e80e6"></i><i style="left:1100px;top:180px;background:#9e80e6"></i><i style="left:1120px;top:180px;background:#9e80e6"></i><i style="left:-60px;top:200px;background:#7aa7e7"></i><i style="left:-40px;top:200px;background:#7aa7e7"></i><i style="left:-20px;top:200px;background:#7aa7e7"></i><i style="left:0px;top:200px;background:#7ba7e7"></i><i style="left:20px;top:200px;background:#7ca4e8"></i><i style="left:40px;top:200px;background:#7da2e8"></i><i style="left:60px;top:200px;background:#7e9fe9"></i><i style="left:80px;top:200px;background:#809dea"></i><i style="left:100px;top:200px;background:#819aea"></i><i style="left:120px;top:200px;background:#8298eb"></i><i style="left:140px;top:200px;background:#8397eb"></i><i style="left:160px;top:200px;background:#8395eb"></i><i style="left:180px;top:200px;background:#8494eb"></i><i style="left:200px;top:200px;background:#8494eb"></i><i style="left:220px;top:200px;background:#8493ec"></i><i style="left:240px;top:200px;background:#8593ec"></i><i style="left:260px;top:200px;background:#8593ec"></i><i style="left:280px;top:200px;background:#8592ec"></i><i style="left:300px;top:200px;background:#8592ec"></i><i style="left:320px;top:200px;background:#8692ec"></i><i style="left:340px;top:200px;background:#8692ec"></i><i style="left:360px;top:200px;background:#8792ec"></i><i style="left:380px;top:200px;background:#8792ec"></i><i style="left:400px;top:200px;background:#8892ed"></i><i style="left:420px;top:200px;background:#8893ed"></i><i style="left:440px;top:200px;background:#8993ed"></i><i style="left:460px;top:200px;background:#8a93ed"></i><i style="left:480px;top:200px;background:#8b93ed"></i><i style="left:500px;top:200px;background:#8c93ed"></i><i style="left:520px;top:200px;background:#8e93ed"></i><i style="left:540px;top:200px;background:#8f94ee"></i><i style="left:560px;top:200px;background:#9194ee"></i><i style="left:580px;top:200px;background:#9295ee"></i><i style="left:600px;top:200px;background:#9495ee"></i><i style="left:620px;top:200px;background:#9696ef"></i><i style="left:640px;top:200px;background:#9896ef"></i><i style="left:660px;top:200px;background:#9b97ef"></i><i style="left:680px;top:200px;background:#9d97f0"></i><i style="left:700px;top:200px;background:#a098f0"></i><i style="left:720px;top:200px;background:#a299f1"></i><i style="left:740px;top:200px;background:#a599f1"></i><i style="left:760px;top:200px;background:#a799f2"></i><i style="left:780px;top:200px;background:#a999f2"></i><i style="left:800px;top:200px;background:#ab98f3"></i><i style="left:820px;top:200px;background:#ad98f3"></i><i style="left:840px;top:200px;background:#ae96f4"></i><i style="left:860px;top:200px;background:#af94f4"></i><i style="left:880px;top:200px;background:#af92f4"></i><i style="left:900px;top:200px;background:#ad90f4"></i><i style="left:920px;top:200px;background:#ac8df3"></i><i style="left:940px;top:200px;background:#aa8bf2"></i><i style="left:960px;top:200px;background:#a889f0"></i><i style="left:980px;top:200px;background:#a687ee"></i><i style="left:1000px;top:200px;background:#a485eb"></i><i style="left:1020px;top:200px;background:#a283e9"></i><i style="left:1040px;top:200px;background:#a082e8"></i><i style="left:1060px;top:200px;background:#9e80e6"></i><i style="left:1080px;top:200px;background:#9e80e6"></i><i style="left:1100px;top:200px;background:#9e80e6"></i><i style="left:1120px;top:200px;background:#9e80e6"></i><i style="left:-60px;top:220px;background:#7faee8"></i><i style="left:-40px;top:220px;background:#7faee8"></i><i style="left:-20px;top:220px;background:#7faee8"></i><i style="left:0px;top:220px;background:#80aee8"></i><i style="left:20px;top:220px;background:#81ace8"></i><i style="left:40px;top:220px;background:#82a9e9"></i><i style="left:60px;top:220px;background:#83a6ea"></i><i style="left:80px;top:220px;background:#85a3ea"></i><i style="left:100px;top:220px;background:#86a1eb"></i><i style="left:120px;top:220px;background:#879eeb"></i><i style="left:140px;top:220px;background:#879dec"></i><i style="left:160px;top:220px;background:#889bec"></i><i style="left:180px;top:220px;background:#889aec"></i><i style="left:200px;top:220px;background:#8899ec"></i><i style="left:220px;top:220px;background:#8898ed"></i><i style="left:240px;top:220px;background:#8998ed"></i><i style="left:260px;top:220px;background:#8997ed"></i><i style="left:280px;top:220px;background:#8997ed"></i><i style="left:300px;top:220px;background:#8996ed"></i><i style="left:320px;top:220px;background:#8996ed"></i><i style="left:340px;top:220px;background:#8996ed"></i><i style="left:360px;top:220px;background:#8996ed"></i><i style="left:380px;top:220px;background:#8a96ed"></i><i style="left:400px;top:220px;background:#8a96ed"></i><i style="left:420px;top:220px;background:#8b95ed"></i><i style="left:440px;top:220px;background:#8c95ee"></i><i style="left:460px;top:220px;background:#8c95ee"></i><i style="left:480px;top:220px;background:#8d96ee"></i><i style="left:500px;top:220px;background:#8f96ee"></i><i style="left:520px;top:220px;background:#9096ee"></i><i style="left:540px;top:220px;background:#9196ee"></i><i style="left:560px;top:220px;background:#9397ef"></i><i style="left:580px;top:220px;background:#9497ef"></i><i style="left:600px;top:220px;background:#9698ef"></i><i style="left:620px;top:220px;background:#9898ef"></i><i style="left:640px;top:220px;background:#9a99f0"></i><i style="left:660px;top:220px;background:#9d9af0"></i><i style="left:680px;top:220px;background:#9f9af1"></i><i style="left:700px;top:220px;background:#a29bf1"></i><i style="left:720px;top:220px;background:#a49cf2"></i><i style="left:740px;top:220px;background:#a79cf2"></i><i style="left:760px;top:220px;background:#a99df3"></i><i style="left:780px;top:220px;background:#ac9df3"></i><i style="left:800px;top:220px;background:#ae9df4"></i><i style="left:820px;top:220px;background:#af9cf4"></i><i style="left:840px;top:220px;background:#b19bf5"></i><i style="left:860px;top:220px;background:#b199f5"></i><i style="left:880px;top:220px;background:#b197f5"></i><i style="left:900px;top:220px;background:#af94f5"></i><i style="left:920px;top:220px;background:#ad91f5"></i><i style="left:940px;top:220px;background:#ab8ef3"></i><i style="left:960px;top:220px;background:#a88bf1"></i><i style="left:980px;top:220px;background:#a689ee"></i><i style="left:1000px;top:220px;background:#a486ec"></i><i style="left:1020px;top:220px;background:#a284ea"></i><i style="left:1040px;top:220px;background:#a082e8"></i><i style="left:1060px;top:220px;background:#9e81e7"></i><i style="left:1080px;top:220px;background:#9e81e7"></i><i style="left:1100px;top:220px;background:#9e81e7"></i><i style="left:1120px;top:220px;background:#9e81e7"></i><i style="left:-60px;top:240px;background:#85b5e8"></i><i style="left:-40px;top:240px;background:#85b5e8"></i><i style="left:-20px;top:240px;background:#85b5e8"></i><i style="left:0px;top:240px;background:#85b4e9"></i><i style="left:20px;top:240px;background:#86b2e9"></i><i style="left:40px;top:240px;background:#87b0ea"></i><i style="left:60px;top:240px;background:#89adea"></i><i style="left:80px;top:240px;background:#8aaaeb"></i><i style="left:100px;top:240px;background:#8ba7ec"></i><i style="left:120px;top:240px;background:#8ca4ec"></i><i style="left:140px;top:240px;background:#8ca2ed"></i><i style="left:160px;top:240px;background:#8da1ed"></i><i style="left:180px;top:240px;background:#8d9fed"></i><i style="left:200px;top:240px;background:#8d9eed"></i><i style="left:220px;top:240px;background:#8d9dee"></i><i style="left:240px;top:240px;background:#8c9cee"></i><i style="left:260px;top:240px;background:#8c9cee"></i><i style="left:280px;top:240px;background:#8c9bee"></i><i style="left:300px;top:240px;background:#8c9bee"></i><i style="left:320px;top:240px;background:#8c9aee"></i><i style="left:340px;top:240px;background:#8c99ee"></i><i style="left:360px;top:240px;background:#8c99ee"></i><i style="left:380px;top:240px;background:#8c99ee"></i><i style="left:400px;top:240px;background:#8d98ee"></i><i style="left:420px;top:240px;background:#8d98ee"></i><i style="left:440px;top:240px;background:#8e98ee"></i><i style="left:460px;top:240px;background:#8f98ee"></i><i style="left:480px;top:240px;background:#8f98ef"></i><i style="left:500px;top:240px;background:#9098ef"></i><i style="left:520px;top:240px;background:#9298ef"></i><i style="left:540px;top:240px;background:#9399ef"></i><i style="left:560px;top:240px;background:#9599ef"></i><i style="left:580px;top:240px;background:#969af0"></i><i style="left:600px;top:240px;background:#989af0"></i><i style="left:620px;top:240px;background:#9a9bf0"></i><i style="left:640px;top:240px;background:#9c9cf1"></i><i style="left:660px;top:240px;background:#9f9cf1"></i><i style="left:680px;top:240px;background:#a19df1"></i><i style="left:700px;top:240px;background:#a39ef2"></i><i style="left:720px;top:240px;background:#a69ff2"></i><i style="left:740px;top:240px;background:#a8a0f3"></i><i style="left:760px;top:240px;background:#aba0f3"></i><i style="left:780px;top:240px;background:#ada1f4"></i><i style="left:800px;top:240px;background:#afa1f4"></i><i style="left:820px;top:240px;background:#b1a0f5"></i><i style="left:840px;top:240px;background:#b2a0f5"></i><i style="left:860px;top:240px;background:#b39ff6"></i><i style="left:880px;top:240px;background:#b29cf6"></i><i style="left:900px;top:240px;background:#b199f6"></i><i style="left:920px;top:240px;background:#ae95f6"></i><i style="left:940px;top:240px;background:#ab91f4"></i><i style="left:960px;top:240px;background:#a98df1"></i><i style="left:980px;top:240px;background:#a78aef"></i><i style="left:1000px;top:240px;background:#a488ec"></i><i style="left:1020px;top:240px;background:#a285ea"></i><i style="left:1040px;top:240px;background:#a083e8"></i><i style="left:1060px;top:240px;background:#9f82e7"></i><i style="left:1080px;top:240px;background:#9f82e7"></i><i style="left:1100px;top:240px;background:#9f82e7"></i><i style="left:1120px;top:240px;background:#9f82e7"></i><i style="left:-60px;top:260px;background:#8abae9"></i><i style="left:-40px;top:260px;background:#8abae9"></i><i style="left:-20px;top:260px;background:#8abae9"></i><i style="left:0px;top:260px;background:#8ab9ea"></i><i style="left:20px;top:260px;background:#8bb8ea"></i><i style="left:40px;top:260px;background:#8db5eb"></i><i style="left:60px;top:260px;background:#8eb2eb"></i><i style="left:80px;top:260px;background:#8fafec"></i><i style="left:100px;top:260px;background:#90aded"></i><i style="left:120px;top:260px;background:#91aaed"></i><i style="left:140px;top:260px;background:#91a8ee"></i><i style="left:160px;top:260px;background:#91a6ee"></i><i style="left:180px;top:260px;background:#91a5ee"></i><i style="left:200px;top:260px;background:#91a3ee"></i><i style="left:220px;top:260px;background:#91a2ef"></i><i style="left:240px;top:260px;background:#90a1ef"></i><i style="left:260px;top:260px;background:#90a0ef"></i><i style="left:280px;top:260px;background:#909fef"></i><i style="left:300px;top:260px;background:#8f9eef"></i><i style="left:320px;top:260px;background:#8f9eef"></i><i style="left:340px;top:260px;background:#8f9def"></i><i style="left:360px;top:260px;background:#8f9cef"></i><i style="left:380px;top:260px;background:#8f9cef"></i><i style="left:400px;top:260px;background:#8f9bef"></i><i style="left:420px;top:260px;background:#8f9bef"></i><i style="left:440px;top:260px;background:#909aef"></i><i style="left:460px;top:260px;background:#909aef"></i><i style="left:480px;top:260px;background:#919aef"></i><i style="left:500px;top:260px;background:#929aef"></i><i style="left:520px;top:260px;background:#939af0"></i><i style="left:540px;top:260px;background:#959bf0"></i><i style="left:560px;top:260px;background:#969bf0"></i><i style="left:580px;top:260px;background:#989cf0"></i><i style="left:600px;top:260px;background:#9a9cf0"></i><i style="left:620px;top:260px;background:#9b9df1"></i><i style="left:640px;top:260px;background:#9e9ef1"></i><i style="left:660px;top:260px;background:#a09ff1"></i><i style="left:680px;top:260px;background:#a2a0f2"></i><i style="left:700px;top:260px;background:#a5a1f2"></i><i style="left:720px;top:260px;background:#a7a1f3"></i><i style="left:740px;top:260px;background:#aaa2f3"></i><i style="left:760px;top:260px;background:#aca3f4"></i><i style="left:780px;top:260px;background:#aea4f4"></i><i style="left:800px;top:260px;background:#b0a4f5"></i><i style="left:820px;top:260px;background:#b2a4f5"></i><i style="left:840px;top:260px;background:#b3a4f5"></i><i style="left:860px;top:260px;background:#b4a3f6"></i><i style="left:880px;top:260px;background:#b4a1f6"></i><i style="left:900px;top:260px;background:#b29df6"></i><i style="left:920px;top:260px;background:#af98f5"></i><i style="left:940px;top:260px;background:#ac93f4"></i><i style="left:960px;top:260px;background:#a98ff1"></i><i style="left:980px;top:260px;background:#a78bef"></i><i style="left:1000px;top:260px;background:#a489ec"></i><i style="left:1020px;top:260px;background:#a286ea"></i><i style="left:1040px;top:260px;background:#a084e8"></i><i style="left:1060px;top:260px;background:#9e82e7"></i><i style="left:1080px;top:260px;background:#9e82e7"></i><i style="left:1100px;top:260px;background:#9e82e7"></i><i style="left:1120px;top:260px;background:#9e82e7"></i><i style="left:-60px;top:280px;background:#8fbfeb"></i><i style="left:-40px;top:280px;background:#8fbfeb"></i><i style="left:-20px;top:280px;background:#8fbfeb"></i><i style="left:0px;top:280px;background:#8fbeeb"></i><i style="left:20px;top:280px;background:#91bceb"></i><i style="left:40px;top:280px;background:#92baec"></i><i style="left:60px;top:280px;background:#93b8ec"></i><i style="left:80px;top:280px;background:#94b5ed"></i><i style="left:100px;top:280px;background:#95b2ee"></i><i style="left:120px;top:280px;background:#96afee"></i><i style="left:140px;top:280px;background:#96adef"></i><i style="left:160px;top:280px;background:#96abef"></i><i style="left:180px;top:280px;background:#96aaef"></i><i style="left:200px;top:280px;background:#95a8f0"></i><i style="left:220px;top:280px;background:#94a7f0"></i><i style="left:240px;top:280px;background:#94a6f0"></i><i style="left:260px;top:280px;background:#93a4f0"></i><i style="left:280px;top:280px;background:#93a3f0"></i><i style="left:300px;top:280px;background:#92a2f0"></i><i style="left:320px;top:280px;background:#92a1f0"></i><i style="left:340px;top:280px;background:#91a0f0"></i><i style="left:360px;top:280px;background:#919ff0"></i><i style="left:380px;top:280px;background:#919ef0"></i><i style="left:400px;top:280px;background:#919ef0"></i><i style="left:420px;top:280px;background:#919df0"></i><i style="left:440px;top:280px;background:#929cf0"></i><i style="left:460px;top:280px;background:#929cf0"></i><i style="left:480px;top:280px;background:#939cf0"></i><i style="left:500px;top:280px;background:#949cf0"></i><i style="left:520px;top:280px;background:#959cf0"></i><i style="left:540px;top:280px;background:#969cf0"></i><i style="left:560px;top:280px;background:#979df0"></i><i style="left:580px;top:280px;background:#999df1"></i><i style="left:600px;top:280px;background:#9b9ef1"></i><i style="left:620px;top:280px;background:#9c9ff1"></i><i style="left:640px;top:280px;background:#9f9ff2"></i><i style="left:660px;top:280px;background:#a1a0f2"></i><i style="left:680px;top:280px;background:#a3a1f2"></i><i style="left:700px;top:280px;background:#a5a3f3"></i><i style="left:720px;top:280px;background:#a8a4f3"></i><i style="left:740px;top:280px;background:#aaa5f3"></i><i style="left:760px;top:280px;background:#ada5f4"></i><i style="left:780px;top:280px;background:#afa6f4"></i><i style="left:800px;top:280px;background:#b1a7f5"></i><i style="left:820px;top:280px;background:#b2a7f5"></i><i style="left:840px;top:280px;background:#b4a7f5"></i><i style="left:860px;top:280px;background:#b4a6f5"></i><i style="left:880px;top:280px;background:#b4a4f5"></i><i style="left:900px;top:280px;background:#b29ff5"></i><i style="left:920px;top:280px;background:#af9af5"></i><i style="left:940px;top:280px;background:#ac94f3"></i><i style="left:960px;top:280px;background:#a990f1"></i><i style="left:980px;top:280px;background:#a68cee"></i><i style="left:1000px;top:280px;background:#a489ec"></i><i style="left:1020px;top:280px;background:#a287e9"></i><i style="left:1040px;top:280px;background:#a084e8"></i><i style="left:1060px;top:280px;background:#9e83e6"></i><i style="left:1080px;top:280px;background:#9e83e6"></i><i style="left:1100px;top:280px;background:#9e83e6"></i><i style="left:1120px;top:280px;background:#9e83e6"></i><i style="left:-60px;top:300px;background:#93c2ec"></i><i style="left:-40px;top:300px;background:#93c2ec"></i><i style="left:-20px;top:300px;background:#93c2ec"></i><i style="left:0px;top:300px;background:#94c2ec"></i><i style="left:20px;top:300px;background:#95c0ec"></i><i style="left:40px;top:300px;background:#97beed"></i><i style="left:60px;top:300px;background:#98bcee"></i><i style="left:80px;top:300px;background:#99b9ee"></i><i style="left:100px;top:300px;background:#9ab7ef"></i><i style="left:120px;top:300px;background:#9ab4f0"></i><i style="left:140px;top:300px;background:#9ab2f0"></i><i style="left:160px;top:300px;background:#9ab0f0"></i><i style="left:180px;top:300px;background:#9aaff1"></i><i style="left:200px;top:300px;background:#99adf1"></i><i style="left:220px;top:300px;background:#98acf1"></i><i style="left:240px;top:300px;background:#97aaf1"></i><i style="left:260px;top:300px;background:#96a8f1"></i><i style="left:280px;top:300px;background:#95a7f1"></i><i style="left:300px;top:300px;background:#95a5f1"></i><i style="left:320px;top:300px;background:#94a4f0"></i><i style="left:340px;top:300px;background:#94a3f0"></i><i style="left:360px;top:300px;background:#93a2f0"></i><i style="left:380px;top:300px;background:#93a1f0"></i><i style="left:400px;top:300px;background:#93a0f0"></i><i style="left:420px;top:300px;background:#939ff0"></i><i style="left:440px;top:300px;background:#939ef0"></i><i style="left:460px;top:300px;background:#939ef0"></i><i style="left:480px;top:300px;background:#949ef0"></i><i style="left:500px;top:300px;background:#959df1"></i><i style="left:520px;top:300px;background:#969df1"></i><i style="left:540px;top:300px;background:#979ef1"></i><i style="left:560px;top:300px;background:#989ef1"></i><i style="left:580px;top:300px;background:#9a9ef1"></i><i style="left:600px;top:300px;background:#9b9ff1"></i><i style="left:620px;top:300px;background:#9da0f2"></i><i style="left:640px;top:300px;background:#9fa1f2"></i><i style="left:660px;top:300px;background:#a1a2f2"></i><i style="left:680px;top:300px;background:#a3a3f3"></i><i style="left:700px;top:300px;background:#a6a4f3"></i><i style="left:720px;top:300px;background:#a8a5f3"></i><i style="left:740px;top:300px;background:#aaa6f4"></i><i style="left:760px;top:300px;background:#ada7f4"></i><i style="left:780px;top:300px;background:#afa8f4"></i><i style="left:800px;top:300px;background:#b0a8f4"></i><i style="left:820px;top:300px;background:#b2a8f5"></i><i style="left:840px;top:300px;background:#b3a8f5"></i><i style="left:860px;top:300px;background:#b3a6f5"></i><i style="left:880px;top:300px;background:#b2a3f5"></i><i style="left:900px;top:300px;background:#b09ff5"></i><i style="left:920px;top:300px;background:#ae99f4"></i><i style="left:940px;top:300px;background:#ab94f2"></i><i style="left:960px;top:300px;background:#a890f0"></i><i style="left:980px;top:300px;background:#a58ded"></i><i style="left:1000px;top:300px;background:#a38aeb"></i><i style="left:1020px;top:300px;background:#a187e9"></i><i style="left:1040px;top:300px;background:#9f85e7"></i><i style="left:1060px;top:300px;background:#9d83e6"></i><i style="left:1080px;top:300px;background:#9d83e6"></i><i style="left:1100px;top:300px;background:#9d83e6"></i><i style="left:1120px;top:300px;background:#9d83e6"></i><i style="left:-60px;top:320px;background:#98c5ed"></i><i style="left:-40px;top:320px;background:#98c5ed"></i><i style="left:-20px;top:320px;background:#98c5ed"></i><i style="left:0px;top:320px;background:#98c5ed"></i><i style="left:20px;top:320px;background:#9ac4ed"></i><i style="left:40px;top:320px;background:#9bc2ee"></i><i style="left:60px;top:320px;background:#9cc0ef"></i><i style="left:80px;top:320px;background:#9dbeef"></i><i style="left:100px;top:320px;background:#9dbbf0"></i><i style="left:120px;top:320px;background:#9eb9f1"></i><i style="left:140px;top:320px;background:#9eb7f1"></i><i style="left:160px;top:320px;background:#9eb5f1"></i><i style="left:180px;top:320px;background:#9db4f2"></i><i style="left:200px;top:320px;background:#9cb2f2"></i><i style="left:220px;top:320px;background:#9bb0f2"></i><i style="left:240px;top:320px;background:#9aaef2"></i><i style="left:260px;top:320px;background:#99acf1"></i><i style="left:280px;top:320px;background:#98aaf1"></i><i style="left:300px;top:320px;background:#97a8f1"></i><i style="left:320px;top:320px;background:#96a7f1"></i><i style="left:340px;top:320px;background:#95a5f1"></i><i style="left:360px;top:320px;background:#95a4f1"></i><i style="left:380px;top:320px;background:#94a3f1"></i><i style="left:400px;top:320px;background:#94a1f1"></i><i style="left:420px;top:320px;background:#94a1f1"></i><i style="left:440px;top:320px;background:#94a0f1"></i><i style="left:460px;top:320px;background:#949ff1"></i><i style="left:480px;top:320px;background:#959ff1"></i><i style="left:500px;top:320px;background:#969ef1"></i><i style="left:520px;top:320px;background:#969ef1"></i><i style="left:540px;top:320px;background:#979ef1"></i><i style="left:560px;top:320px;background:#999ff1"></i><i style="left:580px;top:320px;background:#9a9ff1"></i><i style="left:600px;top:320px;background:#9ca0f2"></i><i style="left:620px;top:320px;background:#9da1f2"></i><i style="left:640px;top:320px;background:#9fa1f2"></i><i style="left:660px;top:320px;background:#a1a2f2"></i><i style="left:680px;top:320px;background:#a3a4f3"></i><i style="left:700px;top:320px;background:#a5a5f3"></i><i style="left:720px;top:320px;background:#a8a6f3"></i><i style="left:740px;top:320px;background:#aaa7f3"></i><i style="left:760px;top:320px;background:#aca8f4"></i><i style="left:780px;top:320px;background:#aea9f4"></i><i style="left:800px;top:320px;background:#afa9f4"></i><i style="left:820px;top:320px;background:#b1a9f4"></i><i style="left:840px;top:320px;background:#b1a8f4"></i><i style="left:860px;top:320px;background:#b1a6f4"></i><i style="left:880px;top:320px;background:#b0a3f4"></i><i style="left:900px;top:320px;background:#af9ef4"></i><i style="left:920px;top:320px;background:#ac98f4"></i><i style="left:940px;top:320px;background:#a993f2"></i><i style="left:960px;top:320px;background:#a790ef"></i><i style="left:980px;top:320px;background:#a48ded"></i><i style="left:1000px;top:320px;background:#a28aea"></i><i style="left:1020px;top:320px;background:#a088e9"></i><i style="left:1040px;top:320px;background:#9e85e7"></i><i style="left:1060px;top:320px;background:#9c83e6"></i><i style="left:1080px;top:320px;background:#9c83e6"></i><i style="left:1100px;top:320px;background:#9c83e6"></i><i style="left:1120px;top:320px;background:#9c83e6"></i><i style="left:-60px;top:340px;background:#9bc8ee"></i><i style="left:-40px;top:340px;background:#9bc8ee"></i><i style="left:-20px;top:340px;background:#9bc8ee"></i><i style="left:0px;top:340px;background:#9cc7ee"></i><i style="left:20px;top:340px;background:#9dc6ee"></i><i style="left:40px;top:340px;background:#9fc5ef"></i><i style="left:60px;top:340px;background:#9fc3f0"></i><i style="left:80px;top:340px;background:#a0c1f0"></i><i style="left:100px;top:340px;background:#a1bff1"></i><i style="left:120px;top:340px;background:#a1bdf2"></i><i style="left:140px;top:340px;background:#a1bcf2"></i><i style="left:160px;top:340px;background:#a0baf2"></i><i style="left:180px;top:340px;background:#a0b8f3"></i><i style="left:200px;top:340px;background:#9fb6f3"></i><i style="left:220px;top:340px;background:#9eb4f2"></i><i style="left:240px;top:340px;background:#9cb2f2"></i><i style="left:260px;top:340px;background:#9baff2"></i><i style="left:280px;top:340px;background:#9aadf2"></i><i style="left:300px;top:340px;background:#99abf2"></i><i style="left:320px;top:340px;background:#98a9f2"></i><i style="left:340px;top:340px;background:#97a7f2"></i><i style="left:360px;top:340px;background:#96a6f1"></i><i style="left:380px;top:340px;background:#96a4f1"></i><i style="left:400px;top:340px;background:#95a3f1"></i><i style="left:420px;top:340px;background:#95a2f1"></i><i style="left:440px;top:340px;background:#95a1f1"></i><i style="left:460px;top:340px;background:#95a0f1"></i><i style="left:480px;top:340px;background:#959ff1"></i><i style="left:500px;top:340px;background:#969ff1"></i><i style="left:520px;top:340px;background:#979ff1"></i><i style="left:540px;top:340px;background:#989ff1"></i><i style="left:560px;top:340px;background:#999ff2"></i><i style="left:580px;top:340px;background:#9aa0f2"></i><i style="left:600px;top:340px;background:#9ba0f2"></i><i style="left:620px;top:340px;background:#9da1f2"></i><i style="left:640px;top:340px;background:#9fa2f2"></i><i style="left:660px;top:340px;background:#a1a3f2"></i><i style="left:680px;top:340px;background:#a3a4f3"></i><i style="left:700px;top:340px;background:#a5a5f3"></i><i style="left:720px;top:340px;background:#a7a6f3"></i><i style="left:740px;top:340px;background:#a9a7f3"></i><i style="left:760px;top:340px;background:#aba8f3"></i><i style="left:780px;top:340px;background:#aca9f4"></i><i style="left:800px;top:340px;background:#aea9f4"></i><i style="left:820px;top:340px;background:#afa9f4"></i><i style="left:840px;top:340px;background:#b0a8f4"></i><i style="left:860px;top:340px;background:#afa6f3"></i><i style="left:880px;top:340px;background:#aea2f3"></i><i style="left:900px;top:340px;background:#ad9df3"></i><i style="left:920px;top:340px;background:#ab98f3"></i><i style="left:940px;top:340px;background:#a893f1"></i><i style="left:960px;top:340px;background:#a690ef"></i><i style="left:980px;top:340px;background:#a48dec"></i><i style="left:1000px;top:340px;background:#a18bea"></i><i style="left:1020px;top:340px;background:#9f88e9"></i><i style="left:1040px;top:340px;background:#9d86e8"></i><i style="left:1060px;top:340px;background:#9b84e7"></i><i style="left:1080px;top:340px;background:#9b84e7"></i><i style="left:1100px;top:340px;background:#9b84e7"></i><i style="left:1120px;top:340px;background:#9b84e7"></i><i style="left:-60px;top:360px;background:#9fcaef"></i><i style="left:-40px;top:360px;background:#9fcaef"></i><i style="left:-20px;top:360px;background:#9fcaef"></i><i style="left:0px;top:360px;background:#9fc9ef"></i><i style="left:20px;top:360px;background:#a1c8ef"></i><i style="left:40px;top:360px;background:#a2c7f0"></i><i style="left:60px;top:360px;background:#a3c5f1"></i><i style="left:80px;top:360px;background:#a3c4f1"></i><i style="left:100px;top:360px;background:#a4c2f2"></i><i style="left:120px;top:360px;background:#a4c1f2"></i><i style="left:140px;top:360px;background:#a3bff3"></i><i style="left:160px;top:360px;background:#a3bef3"></i><i style="left:180px;top:360px;background:#a2bcf3"></i><i style="left:200px;top:360px;background:#a1baf3"></i><i style="left:220px;top:360px;background:#a0b7f3"></i><i style="left:240px;top:360px;background:#9eb5f3"></i><i style="left:260px;top:360px;background:#9db2f3"></i><i style="left:280px;top:360px;background:#9cb0f2"></i><i style="left:300px;top:360px;background:#9aadf2"></i><i style="left:320px;top:360px;background:#99abf2"></i><i style="left:340px;top:360px;background:#98a9f2"></i><i style="left:360px;top:360px;background:#97a7f2"></i><i style="left:380px;top:360px;background:#97a5f2"></i><i style="left:400px;top:360px;background:#96a4f2"></i><i style="left:420px;top:360px;background:#96a3f2"></i><i style="left:440px;top:360px;background:#95a1f2"></i><i style="left:460px;top:360px;background:#95a1f1"></i><i style="left:480px;top:360px;background:#96a0f2"></i><i style="left:500px;top:360px;background:#969ff2"></i><i style="left:520px;top:360px;background:#979ff2"></i><i style="left:540px;top:360px;background:#979ff2"></i><i style="left:560px;top:360px;background:#989ff2"></i><i style="left:580px;top:360px;background:#9a9ff2"></i><i style="left:600px;top:360px;background:#9ba0f2"></i><i style="left:620px;top:360px;background:#9ca1f2"></i><i style="left:640px;top:360px;background:#9ea1f2"></i><i style="left:660px;top:360px;background:#a0a2f2"></i><i style="left:680px;top:360px;background:#a2a3f3"></i><i style="left:700px;top:360px;background:#a3a4f3"></i><i style="left:720px;top:360px;background:#a5a5f3"></i><i style="left:740px;top:360px;background:#a7a6f3"></i><i style="left:760px;top:360px;background:#a9a7f3"></i><i style="left:780px;top:360px;background:#aba8f3"></i><i style="left:800px;top:360px;background:#aca8f3"></i><i style="left:820px;top:360px;background:#ada8f3"></i><i style="left:840px;top:360px;background:#ada7f3"></i><i style="left:860px;top:360px;background:#ada5f2"></i><i style="left:880px;top:360px;background:#aca2f2"></i><i style="left:900px;top:360px;background:#ab9df2"></i><i style="left:920px;top:360px;background:#a998f1"></i><i style="left:940px;top:360px;background:#a794f0"></i><i style="left:960px;top:360px;background:#a590ee"></i><i style="left:980px;top:360px;background:#a38dec"></i><i style="left:1000px;top:360px;background:#a08beb"></i><i style="left:1020px;top:360px;background:#9e88e9"></i><i style="left:1040px;top:360px;background:#9b86e8"></i><i style="left:1060px;top:360px;background:#9a84e7"></i><i style="left:1080px;top:360px;background:#9a84e7"></i><i style="left:1100px;top:360px;background:#9a84e7"></i><i style="left:1120px;top:360px;background:#9a84e7"></i><i style="left:-60px;top:380px;background:#a1cbef"></i><i style="left:-40px;top:380px;background:#a1cbef"></i><i style="left:-20px;top:380px;background:#a1cbef"></i><i style="left:0px;top:380px;background:#a2caf0"></i><i style="left:20px;top:380px;background:#a3caf0"></i><i style="left:40px;top:380px;background:#a4c8f1"></i><i style="left:60px;top:380px;background:#a5c7f1"></i><i style="left:80px;top:380px;background:#a6c6f2"></i><i style="left:100px;top:380px;background:#a6c5f2"></i><i style="left:120px;top:380px;background:#a6c3f3"></i><i style="left:140px;top:380px;background:#a6c2f3"></i><i style="left:160px;top:380px;background:#a5c1f4"></i><i style="left:180px;top:380px;background:#a4bff4"></i><i style="left:200px;top:380px;background:#a3bcf4"></i><i style="left:220px;top:380px;background:#a1baf3"></i><i style="left:240px;top:380px;background:#a0b7f3"></i><i style="left:260px;top:380px;background:#9eb4f3"></i><i style="left:280px;top:380px;background:#9db1f3"></i><i style="left:300px;top:380px;background:#9baff3"></i><i style="left:320px;top:380px;background:#9aacf2"></i><i style="left:340px;top:380px;background:#99aaf2"></i><i style="left:360px;top:380px;background:#98a8f2"></i><i style="left:380px;top:380px;background:#97a6f2"></i><i style="left:400px;top:380px;background:#96a4f2"></i><i style="left:420px;top:380px;background:#96a3f2"></i><i style="left:440px;top:380px;background:#96a2f2"></i><i style="left:460px;top:380px;background:#95a1f2"></i><i style="left:480px;top:380px;background:#96a0f2"></i><i style="left:500px;top:380px;background:#969ff2"></i><i style="left:520px;top:380px;background:#969ff2"></i><i style="left:540px;top:380px;background:#979ff2"></i><i style="left:560px;top:380px;background:#989ff2"></i><i style="left:580px;top:380px;background:#999ff2"></i><i style="left:600px;top:380px;background:#9a9ff2"></i><i style="left:620px;top:380px;background:#9ba0f2"></i><i style="left:640px;top:380px;background:#9da1f2"></i><i style="left:660px;top:380px;background:#9ea1f2"></i><i style="left:680px;top:380px;background:#a0a2f2"></i><i style="left:700px;top:380px;background:#a2a3f3"></i><i style="left:720px;top:380px;background:#a4a4f3"></i><i style="left:740px;top:380px;background:#a5a5f3"></i><i style="left:760px;top:380px;background:#a7a6f3"></i><i style="left:780px;top:380px;background:#a8a6f3"></i><i style="left:800px;top:380px;background:#aaa7f2"></i><i style="left:820px;top:380px;background:#aaa6f2"></i><i style="left:840px;top:380px;background:#aba5f2"></i><i style="left:860px;top:380px;background:#aba4f1"></i><i style="left:880px;top:380px;background:#aaa1f1"></i><i style="left:900px;top:380px;background:#a99df1"></i><i style="left:920px;top:380px;background:#a898f0"></i><i style="left:940px;top:380px;background:#a694ef"></i><i style="left:960px;top:380px;background:#a490ee"></i><i style="left:980px;top:380px;background:#a18dec"></i><i style="left:1000px;top:380px;background:#9f8beb"></i><i style="left:1020px;top:380px;background:#9c88e9"></i><i style="left:1040px;top:380px;background:#9a86e8"></i><i style="left:1060px;top:380px;background:#9884e7"></i><i style="left:1080px;top:380px;background:#9884e7"></i><i style="left:1100px;top:380px;background:#9884e7"></i><i style="left:1120px;top:380px;background:#9884e7"></i><i style="left:-60px;top:400px;background:#a4ccf0"></i><i style="left:-40px;top:400px;background:#a4ccf0"></i><i style="left:-20px;top:400px;background:#a4ccf0"></i><i style="left:0px;top:400px;background:#a4cbf0"></i><i style="left:20px;top:400px;background:#a5caf1"></i><i style="left:40px;top:400px;background:#a6caf1"></i><i style="left:60px;top:400px;background:#a7c9f2"></i><i style="left:80px;top:400px;background:#a8c7f2"></i><i style="left:100px;top:400px;background:#a8c6f3"></i><i style="left:120px;top:400px;background:#a8c5f3"></i><i style="left:140px;top:400px;background:#a7c4f4"></i><i style="left:160px;top:400px;background:#a7c2f4"></i><i style="left:180px;top:400px;background:#a5c0f4"></i><i style="left:200px;top:400px;background:#a4bef4"></i><i style="left:220px;top:400px;background:#a3bbf4"></i><i style="left:240px;top:400px;background:#a1b8f3"></i><i style="left:260px;top:400px;background:#9fb6f3"></i><i style="left:280px;top:400px;background:#9eb3f3"></i><i style="left:300px;top:400px;background:#9cb0f3"></i><i style="left:320px;top:400px;background:#9badf3"></i><i style="left:340px;top:400px;background:#99abf2"></i><i style="left:360px;top:400px;background:#98a9f2"></i><i style="left:380px;top:400px;background:#97a7f2"></i><i style="left:400px;top:400px;background:#96a5f2"></i><i style="left:420px;top:400px;background:#96a3f2"></i><i style="left:440px;top:400px;background:#95a2f2"></i><i style="left:460px;top:400px;background:#95a0f2"></i><i style="left:480px;top:400px;background:#959ff2"></i><i style="left:500px;top:400px;background:#959ff2"></i><i style="left:520px;top:400px;background:#959ef2"></i><i style="left:540px;top:400px;background:#969ef2"></i><i style="left:560px;top:400px;background:#979ef2"></i><i style="left:580px;top:400px;background:#989ef2"></i><i style="left:600px;top:400px;background:#999ef2"></i><i style="left:620px;top:400px;background:#9a9ff2"></i><i style="left:640px;top:400px;background:#9b9ff2"></i><i style="left:660px;top:400px;background:#9da0f2"></i><i style="left:680px;top:400px;background:#9ea1f2"></i><i style="left:700px;top:400px;background:#a0a2f2"></i><i style="left:720px;top:400px;background:#a1a2f2"></i><i style="left:740px;top:400px;background:#a3a3f2"></i><i style="left:760px;top:400px;background:#a4a4f2"></i><i style="left:780px;top:400px;background:#a6a4f2"></i><i style="left:800px;top:400px;background:#a7a4f2"></i><i style="left:820px;top:400px;background:#a8a4f2"></i><i style="left:840px;top:400px;background:#a8a3f1"></i><i style="left:860px;top:400px;background:#a8a1f1"></i><i style="left:880px;top:400px;background:#a89ff0"></i><i style="left:900px;top:400px;background:#a89bf0"></i><i style="left:920px;top:400px;background:#a697ef"></i><i style="left:940px;top:400px;background:#a593ee"></i><i style="left:960px;top:400px;background:#a390ed"></i><i style="left:980px;top:400px;background:#a08dec"></i><i style="left:1000px;top:400px;background:#9d8aeb"></i><i style="left:1020px;top:400px;background:#9b88ea"></i><i style="left:1040px;top:400px;background:#9886e9"></i><i style="left:1060px;top:400px;background:#9684e8"></i><i style="left:1080px;top:400px;background:#9684e8"></i><i style="left:1100px;top:400px;background:#9684e8"></i><i style="left:1120px;top:400px;background:#9684e8"></i><i style="left:-60px;top:420px;background:#a5ccf1"></i><i style="left:-40px;top:420px;background:#a5ccf1"></i><i style="left:-20px;top:420px;background:#a5ccf1"></i><i style="left:0px;top:420px;background:#a6ccf1"></i><i style="left:20px;top:420px;background:#a7cbf1"></i><i style="left:40px;top:420px;background:#a8caf2"></i><i style="left:60px;top:420px;background:#a9c9f2"></i><i style="left:80px;top:420px;background:#a9c9f3"></i><i style="left:100px;top:420px;background:#a9c7f3"></i><i style="left:120px;top:420px;background:#a9c6f3"></i><i style="left:140px;top:420px;background:#a9c5f4"></i><i style="left:160px;top:420px;background:#a8c3f4"></i><i style="left:180px;top:420px;background:#a7c1f4"></i><i style="left:200px;top:420px;background:#a5bff4"></i><i style="left:220px;top:420px;background:#a3bcf4"></i><i style="left:240px;top:420px;background:#a2b9f3"></i><i style="left:260px;top:420px;background:#a0b6f3"></i><i style="left:280px;top:420px;background:#9eb3f3"></i><i style="left:300px;top:420px;background:#9cb0f3"></i><i style="left:320px;top:420px;background:#9baef3"></i><i style="left:340px;top:420px;background:#99abf2"></i><i style="left:360px;top:420px;background:#98a9f2"></i><i style="left:380px;top:420px;background:#97a6f2"></i><i style="left:400px;top:420px;background:#96a4f2"></i><i style="left:420px;top:420px;background:#95a3f2"></i><i style="left:440px;top:420px;background:#95a1f2"></i><i style="left:460px;top:420px;background:#94a0f2"></i><i style="left:480px;top:420px;background:#949ff2"></i><i style="left:500px;top:420px;background:#949ef2"></i><i style="left:520px;top:420px;background:#949df2"></i><i style="left:540px;top:420px;background:#959df2"></i><i style="left:560px;top:420px;background:#959cf2"></i><i style="left:580px;top:420px;background:#969cf2"></i><i style="left:600px;top:420px;background:#979df2"></i><i style="left:620px;top:420px;background:#989df2"></i><i style="left:640px;top:420px;background:#999df2"></i><i style="left:660px;top:420px;background:#9a9ef2"></i><i style="left:680px;top:420px;background:#9c9ff2"></i><i style="left:700px;top:420px;background:#9d9ff2"></i><i style="left:720px;top:420px;background:#9fa0f2"></i><i style="left:740px;top:420px;background:#a0a1f2"></i><i style="left:760px;top:420px;background:#a1a1f2"></i><i style="left:780px;top:420px;background:#a3a1f2"></i><i style="left:800px;top:420px;background:#a4a1f1"></i><i style="left:820px;top:420px;background:#a5a1f1"></i><i style="left:840px;top:420px;background:#a5a0f1"></i><i style="left:860px;top:420px;background:#a59ef0"></i><i style="left:880px;top:420px;background:#a59cf0"></i><i style="left:900px;top:420px;background:#a599ef"></i><i style="left:920px;top:420px;background:#a495ef"></i><i style="left:940px;top:420px;background:#a392ee"></i><i style="left:960px;top:420px;background:#a18fed"></i><i style="left:980px;top:420px;background:#9e8cec"></i><i style="left:1000px;top:420px;background:#9b89eb"></i><i style="left:1020px;top:420px;background:#9987ea"></i><i style="left:1040px;top:420px;background:#9685e9"></i><i style="left:1060px;top:420px;background:#9483e8"></i><i style="left:1080px;top:420px;background:#9483e8"></i><i style="left:1100px;top:420px;background:#9483e8"></i><i style="left:1120px;top:420px;background:#9483e8"></i><i style="left:-60px;top:440px;background:#a6ccf1"></i><i style="left:-40px;top:440px;background:#a6ccf1"></i><i style="left:-20px;top:440px;background:#a6ccf1"></i><i style="left:0px;top:440px;background:#a7ccf1"></i><i style="left:20px;top:440px;background:#a8cbf2"></i><i style="left:40px;top:440px;background:#a9cbf2"></i><i style="left:60px;top:440px;background:#a9caf2"></i><i style="left:80px;top:440px;background:#aac9f3"></i><i style="left:100px;top:440px;background:#aac8f3"></i><i style="left:120px;top:440px;background:#aac7f3"></i><i style="left:140px;top:440px;background:#a9c6f3"></i><i style="left:160px;top:440px;background:#a9c4f4"></i><i style="left:180px;top:440px;background:#a7c2f4"></i><i style="left:200px;top:440px;background:#a6c0f3"></i><i style="left:220px;top:440px;background:#a4bdf3"></i><i style="left:240px;top:440px;background:#a2baf3"></i><i style="left:260px;top:440px;background:#a0b7f3"></i><i style="left:280px;top:440px;background:#9eb3f3"></i><i style="left:300px;top:440px;background:#9cb0f3"></i><i style="left:320px;top:440px;background:#9aadf3"></i><i style="left:340px;top:440px;background:#99abf2"></i><i style="left:360px;top:440px;background:#98a8f2"></i><i style="left:380px;top:440px;background:#96a6f2"></i><i style="left:400px;top:440px;background:#95a4f2"></i><i style="left:420px;top:440px;background:#95a2f2"></i><i style="left:440px;top:440px;background:#94a0f2"></i><i style="left:460px;top:440px;background:#939ff2"></i><i style="left:480px;top:440px;background:#939df2"></i><i style="left:500px;top:440px;background:#939cf2"></i><i style="left:520px;top:440px;background:#939cf2"></i><i style="left:540px;top:440px;background:#939bf2"></i><i style="left:560px;top:440px;background:#949bf2"></i><i style="left:580px;top:440px;background:#949af2"></i><i style="left:600px;top:440px;background:#959bf2"></i><i style="left:620px;top:440px;background:#969bf2"></i><i style="left:640px;top:440px;background:#979bf2"></i><i style="left:660px;top:440px;background:#989bf2"></i><i style="left:680px;top:440px;background:#999cf2"></i><i style="left:700px;top:440px;background:#9a9df2"></i><i style="left:720px;top:440px;background:#9c9df2"></i><i style="left:740px;top:440px;background:#9d9ef2"></i><i style="left:760px;top:440px;background:#9e9ef1"></i><i style="left:780px;top:440px;background:#9f9ef1"></i><i style="left:800px;top:440px;background:#a09ef1"></i><i style="left:820px;top:440px;background:#a19df1"></i><i style="left:840px;top:440px;background:#a29cf0"></i><i style="left:860px;top:440px;background:#a29bf0"></i><i style="left:880px;top:440px;background:#a299ef"></i><i style="left:900px;top:440px;background:#a296ef"></i><i style="left:920px;top:440px;background:#a293ee"></i><i style="left:940px;top:440px;background:#a090ee"></i><i style="left:960px;top:440px;background:#9e8ded"></i><i style="left:980px;top:440px;background:#9c8aec"></i><i style="left:1000px;top:440px;background:#9988eb"></i><i style="left:1020px;top:440px;background:#9686ea"></i><i style="left:1040px;top:440px;background:#9483e9"></i><i style="left:1060px;top:440px;background:#9281e9"></i><i style="left:1080px;top:440px;background:#9281e9"></i><i style="left:1100px;top:440px;background:#9281e9"></i><i style="left:1120px;top:440px;background:#9281e9"></i><i style="left:-60px;top:460px;background:#a7cdf1"></i><i style="left:-40px;top:460px;background:#a7cdf1"></i><i style="left:-20px;top:460px;background:#a7cdf1"></i><i style="left:0px;top:460px;background:#a8ccf2"></i><i style="left:20px;top:460px;background:#a8ccf2"></i><i style="left:40px;top:460px;background:#a9cbf2"></i><i style="left:60px;top:460px;background:#aacaf3"></i><i style="left:80px;top:460px;background:#aacaf3"></i><i style="left:100px;top:460px;background:#abc9f3"></i><i style="left:120px;top:460px;background:#aac7f3"></i><i style="left:140px;top:460px;background:#aac6f3"></i><i style="left:160px;top:460px;background:#a9c4f3"></i><i style="left:180px;top:460px;background:#a7c2f3"></i><i style="left:200px;top:460px;background:#a6c0f3"></i><i style="left:220px;top:460px;background:#a3bdf3"></i><i style="left:240px;top:460px;background:#a1b9f3"></i><i style="left:260px;top:460px;background:#9fb6f3"></i><i style="left:280px;top:460px;background:#9db3f3"></i><i style="left:300px;top:460px;background:#9bb0f2"></i><i style="left:320px;top:460px;background:#9aadf2"></i><i style="left:340px;top:460px;background:#98aaf2"></i><i style="left:360px;top:460px;background:#97a7f2"></i><i style="left:380px;top:460px;background:#96a5f2"></i><i style="left:400px;top:460px;background:#94a3f2"></i><i style="left:420px;top:460px;background:#93a0f2"></i><i style="left:440px;top:460px;background:#939ff2"></i><i style="left:460px;top:460px;background:#929df2"></i><i style="left:480px;top:460px;background:#929cf2"></i><i style="left:500px;top:460px;background:#919bf2"></i><i style="left:520px;top:460px;background:#919af2"></i><i style="left:540px;top:460px;background:#9199f1"></i><i style="left:560px;top:460px;background:#9299f1"></i><i style="left:580px;top:460px;background:#9298f1"></i><i style="left:600px;top:460px;background:#9398f1"></i><i style="left:620px;top:460px;background:#9398f1"></i><i style="left:640px;top:460px;background:#9498f1"></i><i style="left:660px;top:460px;background:#9599f1"></i><i style="left:680px;top:460px;background:#9699f1"></i><i style="left:700px;top:460px;background:#9799f1"></i><i style="left:720px;top:460px;background:#989af1"></i><i style="left:740px;top:460px;background:#999af1"></i><i style="left:760px;top:460px;background:#9a9af1"></i><i style="left:780px;top:460px;background:#9b9af1"></i><i style="left:800px;top:460px;background:#9c9af0"></i><i style="left:820px;top:460px;background:#9d99f0"></i><i style="left:840px;top:460px;background:#9e98f0"></i><i style="left:860px;top:460px;background:#9e97ef"></i><i style="left:880px;top:460px;background:#9e95ef"></i><i style="left:900px;top:460px;background:#9e93ee"></i><i style="left:920px;top:460px;background:#9e90ee"></i><i style="left:940px;top:460px;background:#9d8ded"></i><i style="left:960px;top:460px;background:#9b8aed"></i><i style="left:980px;top:460px;background:#9988ec"></i><i style="left:1000px;top:460px;background:#9686eb"></i><i style="left:1020px;top:460px;background:#9483eb"></i><i style="left:1040px;top:460px;background:#9181ea"></i><i style="left:1060px;top:460px;background:#8f7fe9"></i><i style="left:1080px;top:460px;background:#8f7fe9"></i><i style="left:1100px;top:460px;background:#8f7fe9"></i><i style="left:1120px;top:460px;background:#8f7fe9"></i><i style="left:-60px;top:480px;background:#a7cdf1"></i><i style="left:-40px;top:480px;background:#a7cdf1"></i><i style="left:-20px;top:480px;background:#a7cdf1"></i><i style="left:0px;top:480px;background:#a8ccf2"></i><i style="left:20px;top:480px;background:#a9ccf2"></i><i style="left:40px;top:480px;background:#a9cbf2"></i><i style="left:60px;top:480px;background:#aacaf2"></i><i style="left:80px;top:480px;background:#aacaf3"></i><i style="left:100px;top:480px;background:#aac9f3"></i><i style="left:120px;top:480px;background:#aac7f3"></i><i style="left:140px;top:480px;background:#aac6f3"></i><i style="left:160px;top:480px;background:#a9c4f3"></i><i style="left:180px;top:480px;background:#a7c2f3"></i><i style="left:200px;top:480px;background:#a5bff3"></i><i style="left:220px;top:480px;background:#a3bcf3"></i><i style="left:240px;top:480px;background:#a0b9f2"></i><i style="left:260px;top:480px;background:#9eb5f2"></i><i style="left:280px;top:480px;background:#9cb2f2"></i><i style="left:300px;top:480px;background:#9aaef2"></i><i style="left:320px;top:480px;background:#98abf2"></i><i style="left:340px;top:480px;background:#97a9f2"></i><i style="left:360px;top:480px;background:#95a6f2"></i><i style="left:380px;top:480px;background:#94a3f2"></i><i style="left:400px;top:480px;background:#93a1f2"></i><i style="left:420px;top:480px;background:#929ff2"></i><i style="left:440px;top:480px;background:#919df2"></i><i style="left:460px;top:480px;background:#909bf2"></i><i style="left:480px;top:480px;background:#909af1"></i><i style="left:500px;top:480px;background:#8f99f1"></i><i style="left:520px;top:480px;background:#8f97f1"></i><i style="left:540px;top:480px;background:#8f97f1"></i><i style="left:560px;top:480px;background:#8f96f1"></i><i style="left:580px;top:480px;background:#9096f1"></i><i style="left:600px;top:480px;background:#9095f1"></i><i style="left:620px;top:480px;background:#9195f1"></i><i style="left:640px;top:480px;background:#9195f1"></i><i style="left:660px;top:480px;background:#9295f1"></i><i style="left:680px;top:480px;background:#9395f1"></i><i style="left:700px;top:480px;background:#9496f1"></i><i style="left:720px;top:480px;background:#9596f1"></i><i style="left:740px;top:480px;background:#9696f1"></i><i style="left:760px;top:480px;background:#9696f0"></i><i style="left:780px;top:480px;background:#9796f0"></i><i style="left:800px;top:480px;background:#9895f0"></i><i style="left:820px;top:480px;background:#9995f0"></i><i style="left:840px;top:480px;background:#9994ef"></i><i style="left:860px;top:480px;background:#9a93ef"></i><i style="left:880px;top:480px;background:#9a91ef"></i><i style="left:900px;top:480px;background:#9a8fee"></i><i style="left:920px;top:480px;background:#998cee"></i><i style="left:940px;top:480px;background:#988aed"></i><i style="left:960px;top:480px;background:#9787ed"></i><i style="left:980px;top:480px;background:#9585ec"></i><i style="left:1000px;top:480px;background:#9383eb"></i><i style="left:1020px;top:480px;background:#9181eb"></i><i style="left:1040px;top:480px;background:#8e7eea"></i><i style="left:1060px;top:480px;background:#8d7de9"></i><i style="left:1080px;top:480px;background:#8d7de9"></i><i style="left:1100px;top:480px;background:#8d7de9"></i><i style="left:1120px;top:480px;background:#8d7de9"></i><i style="left:-60px;top:500px;background:#a7cdf1"></i><i style="left:-40px;top:500px;background:#a7cdf1"></i><i style="left:-20px;top:500px;background:#a7cdf1"></i><i style="left:0px;top:500px;background:#a8ccf2"></i><i style="left:20px;top:500px;background:#a8ccf2"></i><i style="left:40px;top:500px;background:#a9cbf2"></i><i style="left:60px;top:500px;background:#a9caf2"></i><i style="left:80px;top:500px;background:#aac9f2"></i><i style="left:100px;top:500px;background:#aac8f2"></i><i style="left:120px;top:500px;background:#aac7f2"></i><i style="left:140px;top:500px;background:#a9c6f2"></i><i style="left:160px;top:500px;background:#a8c4f2"></i><i style="left:180px;top:500px;background:#a6c1f2"></i><i style="left:200px;top:500px;background:#a4bef2"></i><i style="left:220px;top:500px;background:#a1bbf2"></i><i style="left:240px;top:500px;background:#9eb7f2"></i><i style="left:260px;top:500px;background:#9cb3f2"></i><i style="left:280px;top:500px;background:#9ab0f2"></i><i style="left:300px;top:500px;background:#98adf2"></i><i style="left:320px;top:500px;background:#97aaf2"></i><i style="left:340px;top:500px;background:#95a7f2"></i><i style="left:360px;top:500px;background:#94a4f2"></i><i style="left:380px;top:500px;background:#93a1f2"></i><i style="left:400px;top:500px;background:#929ff2"></i><i style="left:420px;top:500px;background:#909df1"></i><i style="left:440px;top:500px;background:#8f9bf1"></i><i style="left:460px;top:500px;background:#8e99f1"></i><i style="left:480px;top:500px;background:#8e98f1"></i><i style="left:500px;top:500px;background:#8d96f1"></i><i style="left:520px;top:500px;background:#8d95f1"></i><i style="left:540px;top:500px;background:#8d94f1"></i><i style="left:560px;top:500px;background:#8d93f1"></i><i style="left:580px;top:500px;background:#8d93f1"></i><i style="left:600px;top:500px;background:#8d92f1"></i><i style="left:620px;top:500px;background:#8e92f0"></i><i style="left:640px;top:500px;background:#8e92f0"></i><i style="left:660px;top:500px;background:#8f92f0"></i><i style="left:680px;top:500px;background:#8f92f0"></i><i style="left:700px;top:500px;background:#9092f0"></i><i style="left:720px;top:500px;background:#9192f0"></i><i style="left:740px;top:500px;background:#9192f0"></i><i style="left:760px;top:500px;background:#9291f0"></i><i style="left:780px;top:500px;background:#9391f0"></i><i style="left:800px;top:500px;background:#9390ef"></i><i style="left:820px;top:500px;background:#9490ef"></i><i style="left:840px;top:500px;background:#948fef"></i><i style="left:860px;top:500px;background:#958eee"></i><i style="left:880px;top:500px;background:#958dee"></i><i style="left:900px;top:500px;background:#958bee"></i><i style="left:920px;top:500px;background:#9488ed"></i><i style="left:940px;top:500px;background:#9386ed"></i><i style="left:960px;top:500px;background:#9284ec"></i><i style="left:980px;top:500px;background:#9181ec"></i><i style="left:1000px;top:500px;background:#8f7feb"></i><i style="left:1020px;top:500px;background:#8d7deb"></i><i style="left:1040px;top:500px;background:#8b7bea"></i><i style="left:1060px;top:500px;background:#8a79e9"></i><i style="left:1080px;top:500px;background:#8a79e9"></i><i style="left:1100px;top:500px;background:#8a79e9"></i><i style="left:1120px;top:500px;background:#8a79e9"></i><i style="left:-60px;top:520px;background:#a7ccf1"></i><i style="left:-40px;top:520px;background:#a7ccf1"></i><i style="left:-20px;top:520px;background:#a7ccf1"></i><i style="left:0px;top:520px;background:#a7ccf1"></i><i style="left:20px;top:520px;background:#a8cbf2"></i><i style="left:40px;top:520px;background:#a8caf2"></i><i style="left:60px;top:520px;background:#a9c9f2"></i><i style="left:80px;top:520px;background:#a9c8f2"></i><i style="left:100px;top:520px;background:#a9c7f2"></i><i style="left:120px;top:520px;background:#a8c6f2"></i><i style="left:140px;top:520px;background:#a8c4f2"></i><i style="left:160px;top:520px;background:#a6c3f2"></i><i style="left:180px;top:520px;background:#a4c0f1"></i><i style="left:200px;top:520px;background:#a2bcf1"></i><i style="left:220px;top:520px;background:#9fb9f1"></i><i style="left:240px;top:520px;background:#9cb5f1"></i><i style="left:260px;top:520px;background:#9ab1f1"></i><i style="left:280px;top:520px;background:#98aef1"></i><i style="left:300px;top:520px;background:#96abf1"></i><i style="left:320px;top:520px;background:#95a7f1"></i><i style="left:340px;top:520px;background:#93a5f1"></i><i style="left:360px;top:520px;background:#92a2f1"></i><i style="left:380px;top:520px;background:#919ff1"></i><i style="left:400px;top:520px;background:#909df1"></i><i style="left:420px;top:520px;background:#8e9bf1"></i><i style="left:440px;top:520px;background:#8d99f1"></i><i style="left:460px;top:520px;background:#8c97f1"></i><i style="left:480px;top:520px;background:#8c95f1"></i><i style="left:500px;top:520px;background:#8b94f1"></i><i style="left:520px;top:520px;background:#8a92f1"></i><i style="left:540px;top:520px;background:#8a91f1"></i><i style="left:560px;top:520px;background:#8a90f0"></i><i style="left:580px;top:520px;background:#8a90f0"></i><i style="left:600px;top:520px;background:#8a8ff0"></i><i style="left:620px;top:520px;background:#8b8ff0"></i><i style="left:640px;top:520px;background:#8b8ef0"></i><i style="left:660px;top:520px;background:#8b8ef0"></i><i style="left:680px;top:520px;background:#8c8ef0"></i><i style="left:700px;top:520px;background:#8c8df0"></i><i style="left:720px;top:520px;background:#8d8df0"></i><i style="left:740px;top:520px;background:#8d8df0"></i><i style="left:760px;top:520px;background:#8e8cef"></i><i style="left:780px;top:520px;background:#8e8cef"></i><i style="left:800px;top:520px;background:#8f8bef"></i><i style="left:820px;top:520px;background:#8f8aee"></i><i style="left:840px;top:520px;background:#8f8aee"></i><i style="left:860px;top:520px;background:#9089ee"></i><i style="left:880px;top:520px;background:#8f87ed"></i><i style="left:900px;top:520px;background:#8f86ed"></i><i style="left:920px;top:520px;background:#8f84ed"></i><i style="left:940px;top:520px;background:#8e81ec"></i><i style="left:960px;top:520px;background:#8d7fec"></i><i style="left:980px;top:520px;background:#8c7deb"></i><i style="left:1000px;top:520px;background:#8a7beb"></i><i style="left:1020px;top:520px;background:#8979ea"></i><i style="left:1040px;top:520px;background:#8778e9"></i><i style="left:1060px;top:520px;background:#8676e9"></i><i style="left:1080px;top:520px;background:#8676e9"></i><i style="left:1100px;top:520px;background:#8676e9"></i><i style="left:1120px;top:520px;background:#8676e9"></i><i style="left:-60px;top:540px;background:#a7cbf1"></i><i style="left:-40px;top:540px;background:#a7cbf1"></i><i style="left:-20px;top:540px;background:#a7cbf1"></i><i style="left:0px;top:540px;background:#a7cbf1"></i><i style="left:20px;top:540px;background:#a7caf1"></i><i style="left:40px;top:540px;background:#a8c9f1"></i><i style="left:60px;top:540px;background:#a8c8f1"></i><i style="left:80px;top:540px;background:#a8c7f1"></i><i style="left:100px;top:540px;background:#a7c5f1"></i><i style="left:120px;top:540px;background:#a6c4f1"></i><i style="left:140px;top:540px;background:#a5c2f1"></i><i style="left:160px;top:540px;background:#a4c0f1"></i><i style="left:180px;top:540px;background:#a2bdf1"></i><i style="left:200px;top:540px;background:#9fbaf1"></i><i style="left:220px;top:540px;background:#9cb6f1"></i><i style="left:240px;top:540px;background:#99b2f1"></i><i style="left:260px;top:540px;background:#97aef1"></i><i style="left:280px;top:540px;background:#95abf1"></i><i style="left:300px;top:540px;background:#94a8f1"></i><i style="left:320px;top:540px;background:#92a5f1"></i><i style="left:340px;top:540px;background:#91a2f1"></i><i style="left:360px;top:540px;background:#90a0f1"></i><i style="left:380px;top:540px;background:#8f9df1"></i><i style="left:400px;top:540px;background:#8e9bf1"></i><i style="left:420px;top:540px;background:#8c98f1"></i><i style="left:440px;top:540px;background:#8b96f1"></i><i style="left:460px;top:540px;background:#8a94f1"></i><i style="left:480px;top:540px;background:#8992f1"></i><i style="left:500px;top:540px;background:#8891f1"></i><i style="left:520px;top:540px;background:#888ff0"></i><i style="left:540px;top:540px;background:#878ef0"></i><i style="left:560px;top:540px;background:#878df0"></i><i style="left:580px;top:540px;background:#878cf0"></i><i style="left:600px;top:540px;background:#878bef"></i><i style="left:620px;top:540px;background:#878bef"></i><i style="left:640px;top:540px;background:#888aef"></i><i style="left:660px;top:540px;background:#888aef"></i><i style="left:680px;top:540px;background:#888aef"></i><i style="left:700px;top:540px;background:#8889ef"></i><i style="left:720px;top:540px;background:#8889ef"></i><i style="left:740px;top:540px;background:#8988ef"></i><i style="left:760px;top:540px;background:#8987ef"></i><i style="left:780px;top:540px;background:#8986ee"></i><i style="left:800px;top:540px;background:#8a86ee"></i><i style="left:820px;top:540px;background:#8a85ee"></i><i style="left:840px;top:540px;background:#8a84ed"></i><i style="left:860px;top:540px;background:#8a83ed"></i><i style="left:880px;top:540px;background:#8a81ed"></i><i style="left:900px;top:540px;background:#8980ec"></i><i style="left:920px;top:540px;background:#897eec"></i><i style="left:940px;top:540px;background:#887dec"></i><i style="left:960px;top:540px;background:#877beb"></i><i style="left:980px;top:540px;background:#8679eb"></i><i style="left:1000px;top:540px;background:#8577ea"></i><i style="left:1020px;top:540px;background:#8475e9"></i><i style="left:1040px;top:540px;background:#8374e9"></i><i style="left:1060px;top:540px;background:#8272e8"></i><i style="left:1080px;top:540px;background:#8272e8"></i><i style="left:1100px;top:540px;background:#8272e8"></i><i style="left:1120px;top:540px;background:#8272e8"></i><i style="left:-60px;top:560px;background:#a7c9f0"></i><i style="left:-40px;top:560px;background:#a7c9f0"></i><i style="left:-20px;top:560px;background:#a7c9f0"></i><i style="left:0px;top:560px;background:#a7c9f0"></i><i style="left:20px;top:560px;background:#a7c8f0"></i><i style="left:40px;top:560px;background:#a7c7f1"></i><i style="left:60px;top:560px;background:#a6c6f1"></i><i style="left:80px;top:560px;background:#a6c5f1"></i><i style="left:100px;top:560px;background:#a5c3f1"></i><i style="left:120px;top:560px;background:#a4c2f1"></i><i style="left:140px;top:560px;background:#a3c0f1"></i><i style="left:160px;top:560px;background:#a1bdf1"></i><i style="left:180px;top:560px;background:#9ebaf0"></i><i style="left:200px;top:560px;background:#9bb6f0"></i><i style="left:220px;top:560px;background:#98b2f0"></i><i style="left:240px;top:560px;background:#96aff0"></i><i style="left:260px;top:560px;background:#94abf0"></i><i style="left:280px;top:560px;background:#92a8f0"></i><i style="left:300px;top:560px;background:#91a5f0"></i><i style="left:320px;top:560px;background:#90a2f0"></i><i style="left:340px;top:560px;background:#8fa0f0"></i><i style="left:360px;top:560px;background:#8e9df0"></i><i style="left:380px;top:560px;background:#8d9af0"></i><i style="left:400px;top:560px;background:#8c98f0"></i><i style="left:420px;top:560px;background:#8a96f0"></i><i style="left:440px;top:560px;background:#8993f0"></i><i style="left:460px;top:560px;background:#8891f0"></i><i style="left:480px;top:560px;background:#868ff0"></i><i style="left:500px;top:560px;background:#868ef0"></i><i style="left:520px;top:560px;background:#858cf0"></i><i style="left:540px;top:560px;background:#858bf0"></i><i style="left:560px;top:560px;background:#848aef"></i><i style="left:580px;top:560px;background:#8489ef"></i><i style="left:600px;top:560px;background:#8488ef"></i><i style="left:620px;top:560px;background:#8487ef"></i><i style="left:640px;top:560px;background:#8486ef"></i><i style="left:660px;top:560px;background:#8486ef"></i><i style="left:680px;top:560px;background:#8485ef"></i><i style="left:700px;top:560px;background:#8485ef"></i><i style="left:720px;top:560px;background:#8484ef"></i><i style="left:740px;top:560px;background:#8483ef"></i><i style="left:760px;top:560px;background:#8482ee"></i><i style="left:780px;top:560px;background:#8581ee"></i><i style="left:800px;top:560px;background:#8580ed"></i><i style="left:820px;top:560px;background:#857eed"></i><i style="left:840px;top:560px;background:#857dec"></i><i style="left:860px;top:560px;background:#847cec"></i><i style="left:880px;top:560px;background:#847bec"></i><i style="left:900px;top:560px;background:#837aeb"></i><i style="left:920px;top:560px;background:#8379eb"></i><i style="left:940px;top:560px;background:#8277eb"></i><i style="left:960px;top:560px;background:#8176ea"></i><i style="left:980px;top:560px;background:#8174ea"></i><i style="left:1000px;top:560px;background:#8073e9"></i><i style="left:1020px;top:560px;background:#7f71e9"></i><i style="left:1040px;top:560px;background:#7e70e8"></i><i style="left:1060px;top:560px;background:#7d6ee7"></i><i style="left:1080px;top:560px;background:#7d6ee7"></i><i style="left:1100px;top:560px;background:#7d6ee7"></i><i style="left:1120px;top:560px;background:#7d6ee7"></i><i style="left:-60px;top:580px;background:#a6c8f0"></i><i style="left:-40px;top:580px;background:#a6c8f0"></i><i style="left:-20px;top:580px;background:#a6c8f0"></i><i style="left:0px;top:580px;background:#a6c7f0"></i><i style="left:20px;top:580px;background:#a6c6f0"></i><i style="left:40px;top:580px;background:#a6c5f0"></i><i style="left:60px;top:580px;background:#a5c4f0"></i><i style="left:80px;top:580px;background:#a4c2f0"></i><i style="left:100px;top:580px;background:#a3c1f0"></i><i style="left:120px;top:580px;background:#a2bff0"></i><i style="left:140px;top:580px;background:#a0bcf0"></i><i style="left:160px;top:580px;background:#9dbaf0"></i><i style="left:180px;top:580px;background:#9bb6f0"></i><i style="left:200px;top:580px;background:#98b3f0"></i><i style="left:220px;top:580px;background:#95aff0"></i><i style="left:240px;top:580px;background:#92abf0"></i><i style="left:260px;top:580px;background:#90a8f0"></i><i style="left:280px;top:580px;background:#8fa5f0"></i><i style="left:300px;top:580px;background:#8ea2f0"></i><i style="left:320px;top:580px;background:#8d9ff0"></i><i style="left:340px;top:580px;background:#8d9df0"></i><i style="left:360px;top:580px;background:#8c9af0"></i><i style="left:380px;top:580px;background:#8b98f0"></i><i style="left:400px;top:580px;background:#8995f0"></i><i style="left:420px;top:580px;background:#8893f0"></i><i style="left:440px;top:580px;background:#8691f0"></i><i style="left:460px;top:580px;background:#858ef0"></i><i style="left:480px;top:580px;background:#848cf0"></i><i style="left:500px;top:580px;background:#838bf0"></i><i style="left:520px;top:580px;background:#8289f0"></i><i style="left:540px;top:580px;background:#8288ef"></i><i style="left:560px;top:580px;background:#8186ef"></i><i style="left:580px;top:580px;background:#8185ef"></i><i style="left:600px;top:580px;background:#8184ee"></i><i style="left:620px;top:580px;background:#8183ee"></i><i style="left:640px;top:580px;background:#8182ee"></i><i style="left:660px;top:580px;background:#8082ee"></i><i style="left:680px;top:580px;background:#8081ee"></i><i style="left:700px;top:580px;background:#8080ee"></i><i style="left:720px;top:580px;background:#807fee"></i><i style="left:740px;top:580px;background:#807eee"></i><i style="left:760px;top:580px;background:#807dee"></i><i style="left:780px;top:580px;background:#807ced"></i><i style="left:800px;top:580px;background:#807aec"></i><i style="left:820px;top:580px;background:#7f78ec"></i><i style="left:840px;top:580px;background:#7f77eb"></i><i style="left:860px;top:580px;background:#7f76eb"></i><i style="left:880px;top:580px;background:#7e75ea"></i><i style="left:900px;top:580px;background:#7e74ea"></i><i style="left:920px;top:580px;background:#7d73ea"></i><i style="left:940px;top:580px;background:#7c72ea"></i><i style="left:960px;top:580px;background:#7c71ea"></i><i style="left:980px;top:580px;background:#7b70e9"></i><i style="left:1000px;top:580px;background:#7a6ee8"></i><i style="left:1020px;top:580px;background:#796de7"></i><i style="left:1040px;top:580px;background:#796ce7"></i><i style="left:1060px;top:580px;background:#786ae6"></i><i style="left:1080px;top:580px;background:#786ae6"></i><i style="left:1100px;top:580px;background:#786ae6"></i><i style="left:1120px;top:580px;background:#786ae6"></i><i style="left:-60px;top:600px;background:#a5c6ef"></i><i style="left:-40px;top:600px;background:#a5c6ef"></i><i style="left:-20px;top:600px;background:#a5c6ef"></i><i style="left:0px;top:600px;background:#a5c5ef"></i><i style="left:20px;top:600px;background:#a5c4ef"></i><i style="left:40px;top:600px;background:#a4c3ef"></i><i style="left:60px;top:600px;background:#a3c1f0"></i><i style="left:80px;top:600px;background:#a2c0f0"></i><i style="left:100px;top:600px;background:#a1bef0"></i><i style="left:120px;top:600px;background:#9fbcf0"></i><i style="left:140px;top:600px;background:#9db9f0"></i><i style="left:160px;top:600px;background:#9ab6f0"></i><i style="left:180px;top:600px;background:#97b3f0"></i><i style="left:200px;top:600px;background:#94aff0"></i><i style="left:220px;top:600px;background:#91abf0"></i><i style="left:240px;top:600px;background:#8fa8f0"></i><i style="left:260px;top:600px;background:#8da4f0"></i><i style="left:280px;top:600px;background:#8ca2f0"></i><i style="left:300px;top:600px;background:#8b9ff0"></i><i style="left:320px;top:600px;background:#8b9cef"></i><i style="left:340px;top:600px;background:#8a9aef"></i><i style="left:360px;top:600px;background:#8997f0"></i><i style="left:380px;top:600px;background:#8895f0"></i><i style="left:400px;top:600px;background:#8793f0"></i><i style="left:420px;top:600px;background:#8590f0"></i><i style="left:440px;top:600px;background:#848ef0"></i><i style="left:460px;top:600px;background:#828cf0"></i><i style="left:480px;top:600px;background:#8189f0"></i><i style="left:500px;top:600px;background:#8088ef"></i><i style="left:520px;top:600px;background:#7f86ef"></i><i style="left:540px;top:600px;background:#7f84ef"></i><i style="left:560px;top:600px;background:#7e83ee"></i><i style="left:580px;top:600px;background:#7e82ee"></i><i style="left:600px;top:600px;background:#7e81ee"></i><i style="left:620px;top:600px;background:#7d80ee"></i><i style="left:640px;top:600px;background:#7d7fed"></i><i style="left:660px;top:600px;background:#7d7eee"></i><i style="left:680px;top:600px;background:#7d7dee"></i><i style="left:700px;top:600px;background:#7c7cee"></i><i style="left:720px;top:600px;background:#7c7bee"></i><i style="left:740px;top:600px;background:#7c79ed"></i><i style="left:760px;top:600px;background:#7b78ed"></i><i style="left:780px;top:600px;background:#7b76ec"></i><i style="left:800px;top:600px;background:#7b75ec"></i><i style="left:820px;top:600px;background:#7a73eb"></i><i style="left:840px;top:600px;background:#7a71ea"></i><i style="left:860px;top:600px;background:#7a70ea"></i><i style="left:880px;top:600px;background:#796fe9"></i><i style="left:900px;top:600px;background:#786ee9"></i><i style="left:920px;top:600px;background:#786ee9"></i><i style="left:940px;top:600px;background:#776de9"></i><i style="left:960px;top:600px;background:#766ce9"></i><i style="left:980px;top:600px;background:#766be8"></i><i style="left:1000px;top:600px;background:#756ae7"></i><i style="left:1020px;top:600px;background:#7469e6"></i><i style="left:1040px;top:600px;background:#7468e6"></i><i style="left:1060px;top:600px;background:#7367e5"></i><i style="left:1080px;top:600px;background:#7367e5"></i><i style="left:1100px;top:600px;background:#7367e5"></i><i style="left:1120px;top:600px;background:#7367e5"></i><i style="left:-60px;top:620px;background:#a4c4ef"></i><i style="left:-40px;top:620px;background:#a4c4ef"></i><i style="left:-20px;top:620px;background:#a4c4ef"></i><i style="left:0px;top:620px;background:#a4c3ef"></i><i style="left:20px;top:620px;background:#a3c2ef"></i><i style="left:40px;top:620px;background:#a2c0ef"></i><i style="left:60px;top:620px;background:#a1bfef"></i><i style="left:80px;top:620px;background:#a0bdef"></i><i style="left:100px;top:620px;background:#9ebbef"></i><i style="left:120px;top:620px;background:#9cb8ef"></i><i style="left:140px;top:620px;background:#9ab6ef"></i><i style="left:160px;top:620px;background:#97b3ef"></i><i style="left:180px;top:620px;background:#94afef"></i><i style="left:200px;top:620px;background:#91acef"></i><i style="left:220px;top:620px;background:#8ea8ef"></i><i style="left:240px;top:620px;background:#8ca5ef"></i><i style="left:260px;top:620px;background:#8aa1ef"></i><i style="left:280px;top:620px;background:#899fef"></i><i style="left:300px;top:620px;background:#899cef"></i><i style="left:320px;top:620px;background:#889aef"></i><i style="left:340px;top:620px;background:#8897ef"></i><i style="left:360px;top:620px;background:#8795ef"></i><i style="left:380px;top:620px;background:#8692ef"></i><i style="left:400px;top:620px;background:#8490ef"></i><i style="left:420px;top:620px;background:#838def"></i><i style="left:440px;top:620px;background:#818bef"></i><i style="left:460px;top:620px;background:#8089ef"></i><i style="left:480px;top:620px;background:#7f87ef"></i><i style="left:500px;top:620px;background:#7d85ef"></i><i style="left:520px;top:620px;background:#7d83ef"></i><i style="left:540px;top:620px;background:#7c81ee"></i><i style="left:560px;top:620px;background:#7b80ee"></i><i style="left:580px;top:620px;background:#7b7eee"></i><i style="left:600px;top:620px;background:#7b7ded"></i><i style="left:620px;top:620px;background:#7a7ced"></i><i style="left:640px;top:620px;background:#7a7bed"></i><i style="left:660px;top:620px;background:#797aed"></i><i style="left:680px;top:620px;background:#7979ed"></i><i style="left:700px;top:620px;background:#7877ed"></i><i style="left:720px;top:620px;background:#7876ed"></i><i style="left:740px;top:620px;background:#7775ed"></i><i style="left:760px;top:620px;background:#7773ec"></i><i style="left:780px;top:620px;background:#7772ec"></i><i style="left:800px;top:620px;background:#7670eb"></i><i style="left:820px;top:620px;background:#766eea"></i><i style="left:840px;top:620px;background:#756ce9"></i><i style="left:860px;top:620px;background:#756be9"></i><i style="left:880px;top:620px;background:#746ae8"></i><i style="left:900px;top:620px;background:#7369e8"></i><i style="left:920px;top:620px;background:#7369e8"></i><i style="left:940px;top:620px;background:#7268e8"></i><i style="left:960px;top:620px;background:#7167e7"></i><i style="left:980px;top:620px;background:#7167e7"></i><i style="left:1000px;top:620px;background:#7066e6"></i><i style="left:1020px;top:620px;background:#7065e5"></i><i style="left:1040px;top:620px;background:#6f64e5"></i><i style="left:1060px;top:620px;background:#6e63e4"></i><i style="left:1080px;top:620px;background:#6e63e4"></i><i style="left:1100px;top:620px;background:#6e63e4"></i><i style="left:1120px;top:620px;background:#6e63e4"></i><i style="left:-60px;top:640px;background:#a2c2ee"></i><i style="left:-40px;top:640px;background:#a2c2ee"></i><i style="left:-20px;top:640px;background:#a2c2ee"></i><i style="left:0px;top:640px;background:#a2c1ee"></i><i style="left:20px;top:640px;background:#a1c0ee"></i><i style="left:40px;top:640px;background:#a0beef"></i><i style="left:60px;top:640px;background:#9fbcef"></i><i style="left:80px;top:640px;background:#9dbaef"></i><i style="left:100px;top:640px;background:#9cb8ef"></i><i style="left:120px;top:640px;background:#9ab5ef"></i><i style="left:140px;top:640px;background:#97b3ef"></i><i style="left:160px;top:640px;background:#95b0ef"></i><i style="left:180px;top:640px;background:#92acef"></i><i style="left:200px;top:640px;background:#8fa9ef"></i><i style="left:220px;top:640px;background:#8ca5ef"></i><i style="left:240px;top:640px;background:#8aa2ef"></i><i style="left:260px;top:640px;background:#889fef"></i><i style="left:280px;top:640px;background:#879cef"></i><i style="left:300px;top:640px;background:#8699ef"></i><i style="left:320px;top:640px;background:#8697ef"></i><i style="left:340px;top:640px;background:#8594ef"></i><i style="left:360px;top:640px;background:#8492ef"></i><i style="left:380px;top:640px;background:#838fef"></i><i style="left:400px;top:640px;background:#828def"></i><i style="left:420px;top:640px;background:#808bef"></i><i style="left:440px;top:640px;background:#7f88ef"></i><i style="left:460px;top:640px;background:#7d86ef"></i><i style="left:480px;top:640px;background:#7c84ef"></i><i style="left:500px;top:640px;background:#7b82ee"></i><i style="left:520px;top:640px;background:#7a80ee"></i><i style="left:540px;top:640px;background:#797eee"></i><i style="left:560px;top:640px;background:#797ded"></i><i style="left:580px;top:640px;background:#787bed"></i><i style="left:600px;top:640px;background:#777aed"></i><i style="left:620px;top:640px;background:#7778ed"></i><i style="left:640px;top:640px;background:#7677ec"></i><i style="left:660px;top:640px;background:#7676ec"></i><i style="left:680px;top:640px;background:#7575ec"></i><i style="left:700px;top:640px;background:#7573ec"></i><i style="left:720px;top:640px;background:#7472ec"></i><i style="left:740px;top:640px;background:#7470ec"></i><i style="left:760px;top:640px;background:#736feb"></i><i style="left:780px;top:640px;background:#736deb"></i><i style="left:800px;top:640px;background:#726bea"></i><i style="left:820px;top:640px;background:#7169e9"></i><i style="left:840px;top:640px;background:#7168e9"></i><i style="left:860px;top:640px;background:#7066e8"></i><i style="left:880px;top:640px;background:#7065e8"></i><i style="left:900px;top:640px;background:#6f65e7"></i><i style="left:920px;top:640px;background:#6e64e7"></i><i style="left:940px;top:640px;background:#6e64e7"></i><i style="left:960px;top:640px;background:#6d63e6"></i><i style="left:980px;top:640px;background:#6c62e6"></i><i style="left:1000px;top:640px;background:#6c62e5"></i><i style="left:1020px;top:640px;background:#6b61e5"></i><i style="left:1040px;top:640px;background:#6b60e4"></i><i style="left:1060px;top:640px;background:#6a5fe3"></i><i style="left:1080px;top:640px;background:#6a5fe3"></i><i style="left:1100px;top:640px;background:#6a5fe3"></i><i style="left:1120px;top:640px;background:#6a5fe3"></i><i style="left:-60px;top:660px;background:#a1c0ee"></i><i style="left:-40px;top:660px;background:#a1c0ee"></i><i style="left:-20px;top:660px;background:#a1c0ee"></i><i style="left:0px;top:660px;background:#a0bfee"></i><i style="left:20px;top:660px;background:#a0beee"></i><i style="left:40px;top:660px;background:#9ebcee"></i><i style="left:60px;top:660px;background:#9dbaee"></i><i style="left:80px;top:660px;background:#9bb8ee"></i><i style="left:100px;top:660px;background:#9ab5ee"></i><i style="left:120px;top:660px;background:#97b3ee"></i><i style="left:140px;top:660px;background:#95b0ee"></i><i style="left:160px;top:660px;background:#92adee"></i><i style="left:180px;top:660px;background:#90aaee"></i><i style="left:200px;top:660px;background:#8da6ee"></i><i style="left:220px;top:660px;background:#8aa3ee"></i><i style="left:240px;top:660px;background:#88a0ee"></i><i style="left:260px;top:660px;background:#879dee"></i><i style="left:280px;top:660px;background:#859aee"></i><i style="left:300px;top:660px;background:#8497ee"></i><i style="left:320px;top:660px;background:#8495ee"></i><i style="left:340px;top:660px;background:#8392ee"></i><i style="left:360px;top:660px;background:#8290ee"></i><i style="left:380px;top:660px;background:#818dee"></i><i style="left:400px;top:660px;background:#7f8bee"></i><i style="left:420px;top:660px;background:#7e88ee"></i><i style="left:440px;top:660px;background:#7d86ee"></i><i style="left:460px;top:660px;background:#7b84ee"></i><i style="left:480px;top:660px;background:#7a81ee"></i><i style="left:500px;top:660px;background:#797fee"></i><i style="left:520px;top:660px;background:#787eee"></i><i style="left:540px;top:660px;background:#777ced"></i><i style="left:560px;top:660px;background:#767aed"></i><i style="left:580px;top:660px;background:#7678ed"></i><i style="left:600px;top:660px;background:#7577ec"></i><i style="left:620px;top:660px;background:#7476ec"></i><i style="left:640px;top:660px;background:#7474ec"></i><i style="left:660px;top:660px;background:#7373ec"></i><i style="left:680px;top:660px;background:#7271ec"></i><i style="left:700px;top:660px;background:#7270ec"></i><i style="left:720px;top:660px;background:#716feb"></i><i style="left:740px;top:660px;background:#706deb"></i><i style="left:760px;top:660px;background:#706beb"></i><i style="left:780px;top:660px;background:#6f69ea"></i><i style="left:800px;top:660px;background:#6f68e9"></i><i style="left:820px;top:660px;background:#6e66e9"></i><i style="left:840px;top:660px;background:#6d64e8"></i><i style="left:860px;top:660px;background:#6d63e8"></i><i style="left:880px;top:660px;background:#6c62e7"></i><i style="left:900px;top:660px;background:#6b61e7"></i><i style="left:920px;top:660px;background:#6b61e7"></i><i style="left:940px;top:660px;background:#6a60e6"></i><i style="left:960px;top:660px;background:#6960e6"></i><i style="left:980px;top:660px;background:#695fe5"></i><i style="left:1000px;top:660px;background:#685ee5"></i><i style="left:1020px;top:660px;background:#685de4"></i><i style="left:1040px;top:660px;background:#675de3"></i><i style="left:1060px;top:660px;background:#675ce3"></i><i style="left:1080px;top:660px;background:#675ce3"></i><i style="left:1100px;top:660px;background:#675ce3"></i><i style="left:1120px;top:660px;background:#675ce3"></i><i style="left:-60px;top:680px;background:#a1c0ee"></i><i style="left:-40px;top:680px;background:#a1c0ee"></i><i style="left:-20px;top:680px;background:#a1c0ee"></i><i style="left:0px;top:680px;background:#a0bfee"></i><i style="left:20px;top:680px;background:#a0beee"></i><i style="left:40px;top:680px;background:#9ebcee"></i><i style="left:60px;top:680px;background:#9dbaee"></i><i style="left:80px;top:680px;background:#9bb8ee"></i><i style="left:100px;top:680px;background:#9ab5ee"></i><i style="left:120px;top:680px;background:#97b3ee"></i><i style="left:140px;top:680px;background:#95b0ee"></i><i style="left:160px;top:680px;background:#92adee"></i><i style="left:180px;top:680px;background:#90aaee"></i><i style="left:200px;top:680px;background:#8da6ee"></i><i style="left:220px;top:680px;background:#8aa3ee"></i><i style="left:240px;top:680px;background:#88a0ee"></i><i style="left:260px;top:680px;background:#879dee"></i><i style="left:280px;top:680px;background:#859aee"></i><i style="left:300px;top:680px;background:#8497ee"></i><i style="left:320px;top:680px;background:#8495ee"></i><i style="left:340px;top:680px;background:#8392ee"></i><i style="left:360px;top:680px;background:#8290ee"></i><i style="left:380px;top:680px;background:#818dee"></i><i style="left:400px;top:680px;background:#7f8bee"></i><i style="left:420px;top:680px;background:#7e88ee"></i><i style="left:440px;top:680px;background:#7d86ee"></i><i style="left:460px;top:680px;background:#7b84ee"></i><i style="left:480px;top:680px;background:#7a81ee"></i><i style="left:500px;top:680px;background:#797fee"></i><i style="left:520px;top:680px;background:#787eee"></i><i style="left:540px;top:680px;background:#777ced"></i><i style="left:560px;top:680px;background:#767aed"></i><i style="left:580px;top:680px;background:#7678ed"></i><i style="left:600px;top:680px;background:#7577ec"></i><i style="left:620px;top:680px;background:#7476ec"></i><i style="left:640px;top:680px;background:#7474ec"></i><i style="left:660px;top:680px;background:#7373ec"></i><i style="left:680px;top:680px;background:#7271ec"></i><i style="left:700px;top:680px;background:#7270ec"></i><i style="left:720px;top:680px;background:#716feb"></i><i style="left:740px;top:680px;background:#706deb"></i><i style="left:760px;top:680px;background:#706beb"></i><i style="left:780px;top:680px;background:#6f69ea"></i><i style="left:800px;top:680px;background:#6f68e9"></i><i style="left:820px;top:680px;background:#6e66e9"></i><i style="left:840px;top:680px;background:#6d64e8"></i><i style="left:860px;top:680px;background:#6d63e8"></i><i style="left:880px;top:680px;background:#6c62e7"></i><i style="left:900px;top:680px;background:#6b61e7"></i><i style="left:920px;top:680px;background:#6b61e7"></i><i style="left:940px;top:680px;background:#6a60e6"></i><i style="left:960px;top:680px;background:#6960e6"></i><i style="left:980px;top:680px;background:#695fe5"></i><i style="left:1000px;top:680px;background:#685ee5"></i><i style="left:1020px;top:680px;background:#685de4"></i><i style="left:1040px;top:680px;background:#675de3"></i><i style="left:1060px;top:680px;background:#675ce3"></i><i style="left:1080px;top:680px;background:#675ce3"></i><i style="left:1100px;top:680px;background:#675ce3"></i><i style="left:1120px;top:680px;background:#675ce3"></i><i style="left:-60px;top:700px;background:#a1c0ee"></i><i style="left:-40px;top:700px;background:#a1c0ee"></i><i style="left:-20px;top:700px;background:#a1c0ee"></i><i style="left:0px;top:700px;background:#a0bfee"></i><i style="left:20px;top:700px;background:#a0beee"></i><i style="left:40px;top:700px;background:#9ebcee"></i><i style="left:60px;top:700px;background:#9dbaee"></i><i style="left:80px;top:700px;background:#9bb8ee"></i><i style="left:100px;top:700px;background:#9ab5ee"></i><i style="left:120px;top:700px;background:#97b3ee"></i><i style="left:140px;top:700px;background:#95b0ee"></i><i style="left:160px;top:700px;background:#92adee"></i><i style="left:180px;top:700px;background:#90aaee"></i><i style="left:200px;top:700px;background:#8da6ee"></i><i style="left:220px;top:700px;background:#8aa3ee"></i><i style="left:240px;top:700px;background:#88a0ee"></i><i style="left:260px;top:700px;background:#879dee"></i><i style="left:280px;top:700px;background:#859aee"></i><i style="left:300px;top:700px;background:#8497ee"></i><i style="left:320px;top:700px;background:#8495ee"></i><i style="left:340px;top:700px;background:#8392ee"></i><i style="left:360px;top:700px;background:#8290ee"></i><i style="left:380px;top:700px;background:#818dee"></i><i style="left:400px;top:700px;background:#7f8bee"></i><i style="left:420px;top:700px;background:#7e88ee"></i><i style="left:440px;top:700px;background:#7d86ee"></i><i style="left:460px;top:700px;background:#7b84ee"></i><i style="left:480px;top:700px;background:#7a81ee"></i><i style="left:500px;top:700px;background:#797fee"></i><i style="left:520px;top:700px;background:#787eee"></i><i style="left:540px;top:700px;background:#777ced"></i><i style="left:560px;top:700px;background:#767aed"></i><i style="left:580px;top:700px;background:#7678ed"></i><i style="left:600px;top:700px;background:#7577ec"></i><i style="left:620px;top:700px;background:#7476ec"></i><i style="left:640px;top:700px;background:#7474ec"></i><i style="left:660px;top:700px;background:#7373ec"></i><i style="left:680px;top:700px;background:#7271ec"></i><i style="left:700px;top:700px;background:#7270ec"></i><i style="left:720px;top:700px;background:#716feb"></i><i style="left:740px;top:700px;background:#706deb"></i><i style="left:760px;top:700px;background:#706beb"></i><i style="left:780px;top:700px;background:#6f69ea"></i><i style="left:800px;top:700px;background:#6f68e9"></i><i style="left:820px;top:700px;background:#6e66e9"></i><i style="left:840px;top:700px;background:#6d64e8"></i><i style="left:860px;top:700px;background:#6d63e8"></i><i style="left:880px;top:700px;background:#6c62e7"></i><i style="left:900px;top:700px;background:#6b61e7"></i><i style="left:920px;top:700px;background:#6b61e7"></i><i style="left:940px;top:700px;background:#6a60e6"></i><i style="left:960px;top:700px;background:#6960e6"></i><i style="left:980px;top:700px;background:#695fe5"></i><i style="left:1000px;top:700px;background:#685ee5"></i><i style="left:1020px;top:700px;background:#685de4"></i><i style="left:1040px;top:700px;background:#675de3"></i><i style="left:1060px;top:700px;background:#675ce3"></i><i style="left:1080px;top:700px;background:#675ce3"></i><i style="left:1100px;top:700px;background:#675ce3"></i><i style="left:1120px;top:700px;background:#675ce3"></i><i style="left:-60px;top:720px;background:#a1c0ee"></i><i style="left:-40px;top:720px;background:#a1c0ee"></i><i style="left:-20px;top:720px;background:#a1c0ee"></i><i style="left:0px;top:720px;background:#a0bfee"></i><i style="left:20px;top:720px;background:#a0beee"></i><i style="left:40px;top:720px;background:#9ebcee"></i><i style="left:60px;top:720px;background:#9dbaee"></i><i style="left:80px;top:720px;background:#9bb8ee"></i><i style="left:100px;top:720px;background:#9ab5ee"></i><i style="left:120px;top:720px;background:#97b3ee"></i><i style="left:140px;top:720px;background:#95b0ee"></i><i style="left:160px;top:720px;background:#92adee"></i><i style="left:180px;top:720px;background:#90aaee"></i><i style="left:200px;top:720px;background:#8da6ee"></i><i style="left:220px;top:720px;background:#8aa3ee"></i><i style="left:240px;top:720px;background:#88a0ee"></i><i style="left:260px;top:720px;background:#879dee"></i><i style="left:280px;top:720px;background:#859aee"></i><i style="left:300px;top:720px;background:#8497ee"></i><i style="left:320px;top:720px;background:#8495ee"></i><i style="left:340px;top:720px;background:#8392ee"></i><i style="left:360px;top:720px;background:#8290ee"></i><i style="left:380px;top:720px;background:#818dee"></i><i style="left:400px;top:720px;background:#7f8bee"></i><i style="left:420px;top:720px;background:#7e88ee"></i><i style="left:440px;top:720px;background:#7d86ee"></i><i style="left:460px;top:720px;background:#7b84ee"></i><i style="left:480px;top:720px;background:#7a81ee"></i><i style="left:500px;top:720px;background:#797fee"></i><i style="left:520px;top:720px;background:#787eee"></i><i style="left:540px;top:720px;background:#777ced"></i><i style="left:560px;top:720px;background:#767aed"></i><i style="left:580px;top:720px;background:#7678ed"></i><i style="left:600px;top:720px;background:#7577ec"></i><i style="left:620px;top:720px;background:#7476ec"></i><i style="left:640px;top:720px;background:#7474ec"></i><i style="left:660px;top:720px;background:#7373ec"></i><i style="left:680px;top:720px;background:#7271ec"></i><i style="left:700px;top:720px;background:#7270ec"></i><i style="left:720px;top:720px;background:#716feb"></i><i style="left:740px;top:720px;background:#706deb"></i><i style="left:760px;top:720px;background:#706beb"></i><i style="left:780px;top:720px;background:#6f69ea"></i><i style="left:800px;top:720px;background:#6f68e9"></i><i style="left:820px;top:720px;background:#6e66e9"></i><i style="left:840px;top:720px;background:#6d64e8"></i><i style="left:860px;top:720px;background:#6d63e8"></i><i style="left:880px;top:720px;background:#6c62e7"></i><i style="left:900px;top:720px;background:#6b61e7"></i><i style="left:920px;top:720px;background:#6b61e7"></i><i style="left:940px;top:720px;background:#6a60e6"></i><i style="left:960px;top:720px;background:#6960e6"></i><i style="left:980px;top:720px;background:#695fe5"></i><i style="left:1000px;top:720px;background:#685ee5"></i><i style="left:1020px;top:720px;background:#685de4"></i><i style="left:1040px;top:720px;background:#675de3"></i><i style="left:1060px;top:720px;background:#675ce3"></i><i style="left:1080px;top:720px;background:#675ce3"></i><i style="left:1100px;top:720px;background:#675ce3"></i><i style="left:1120px;top:720px;background:#675ce3"></i></div></div>
<div style="position:absolute;left:30px;top:0px;width:320px;height:2px;transform-origin:0 50%;transform:rotate(15.5deg);background:linear-gradient(90deg,rgba(255,255,255,0),rgba(255,255,255,0.16) 30%,rgba(255,255,255,0.13) 70%,rgba(255,255,255,0));filter:blur(0.8px);"></div>
<div style="position:absolute;left:-10px;top:491px;width:230px;height:2px;transform-origin:0 50%;transform:rotate(-7deg);background:linear-gradient(90deg,rgba(255,255,255,0.05),rgba(255,255,255,0.13) 40%,rgba(255,255,255,0.08));filter:blur(0.8px);"></div>

<!-- window frame -->
<div style="position:absolute;left:213px;top:74px;width:654px;height:494px;background:#fff;border:1px solid rgba(50,50,100,0.5);box-shadow:0 0 7px rgba(30,30,70,0.28),0 2px 5px rgba(30,30,70,0.18);"></div>
<!-- file tab -->
<div style="position:absolute;left:215px;top:101px;width:46px;height:19px;background:#1f5eae;"></div>
<!-- ribbon bottom line -->
<div style="position:absolute;left:214px;top:120px;width:654px;height:1px;background:#e3e3e3;"></div>
<!-- address box -->
<div style="position:absolute;left:303px;top:125px;width:258px;height:23px;border:1px solid #d9d9d9;"></div>
<div style="position:absolute;left:537px;top:126px;width:1px;height:23px;background:#e3e3e3;"></div>
<!-- search box -->
<div style="position:absolute;left:573px;top:125px;width:284px;height:23px;border:1px solid #d9d9d9;"></div>
<!-- nav pane divider -->
<div style="position:absolute;left:346px;top:158px;width:1px;height:390px;background:#f3f3f3;"></div>
<!-- This PC selection -->
<div style="position:absolute;left:215px;top:342px;width:129px;height:20px;background:#d9d9d9;"></div>
<!-- section lines -->
<div style="position:absolute;left:429px;top:172px;width:433px;height:1px;background:#ebebeb;"></div>
<div style="position:absolute;left:492px;top:381px;width:370px;height:1px;background:#ebebeb;"></div>
<!-- progress bars -->
<div style="position:absolute;left:618px;top:409px;width:157px;height:11px;background:#e6e6e6;border:1px solid #d2d2d2;box-sizing:border-box;"></div>
<div style="position:absolute;left:619px;top:410px;width:51px;height:9px;background:#3f8fdb;"></div>
<div style="position:absolute;left:406px;top:456px;width:158px;height:10px;background:#e6e6e6;border:1px solid #d2d2d2;box-sizing:border-box;"></div>
<div style="position:absolute;left:407px;top:457px;width:20px;height:8px;background:#3f8fdb;"></div>
<!-- taskbar -->
<div style="position:absolute;left:0;top:634px;width:1066px;height:33px;background:#0f1124;"></div><div style="position:absolute;left:0;top:634px;width:40px;height:33px;background:#121826;"></div>
<div style="position:absolute;left:40px;top:634px;width:287px;height:33px;background:#f0f0f0;"></div>
<div style="position:absolute;left:409px;top:634px;width:40px;height:33px;background:#3a3c50;"></div>
<div style="position:absolute;left:409px;top:665px;width:40px;height:2px;background:#a0c4f0;"></div>

<svg style="position:absolute;left:370px;top:190px;" width="22" height="35" viewBox="0 0 22 35"><defs><linearGradient id="fb3890" x1="0" y1="0" x2="1" y2="1"><stop offset="0" stop-color="#f6da86"/><stop offset="0.6" stop-color="#f4d074"/><stop offset="1" stop-color="#f0c45e"/></linearGradient></defs><rect x="0.5" y="0" width="20" height="30.5" fill="url(#fb3890)"/><polygon points="0,0.5 7.6,3.2 7.6,34 0,30.8" fill="#f9e4a8"/><polygon points="6.2,2.7 7.8,3.3 7.8,34 6.2,33.4" fill="#e9c668"/></svg>
<svg style="position:absolute;left:582px;top:190px;" width="22" height="35" viewBox="0 0 22 35"><defs><linearGradient id="fb6010" x1="0" y1="0" x2="1" y2="1"><stop offset="0" stop-color="#f6da86"/><stop offset="0.6" stop-color="#f4d074"/><stop offset="1" stop-color="#f0c45e"/></linearGradient></defs><rect x="0.5" y="0" width="20" height="30.5" fill="url(#fb6010)"/><polygon points="0,0.5 7.6,3.2 7.6,34 0,30.8" fill="#f9e4a8"/><polygon points="6.2,2.7 7.8,3.3 7.8,34 6.2,33.4" fill="#e9c668"/></svg>
<svg style="position:absolute;left:370px;top:236.7px;" width="22" height="35" viewBox="0 0 22 35"><defs><linearGradient id="fb3936" x1="0" y1="0" x2="1" y2="1"><stop offset="0" stop-color="#f6da86"/><stop offset="0.6" stop-color="#f4d074"/><stop offset="1" stop-color="#f0c45e"/></linearGradient></defs><rect x="0.5" y="0" width="20" height="30.5" fill="url(#fb3936)"/><polygon points="0,0.5 7.6,3.2 7.6,34 0,30.8" fill="#f9e4a8"/><polygon points="6.2,2.7 7.8,3.3 7.8,34 6.2,33.4" fill="#e9c668"/></svg>
<svg style="position:absolute;left:582px;top:236.7px;" width="22" height="35" viewBox="0 0 22 35"><defs><linearGradient id="fb6056" x1="0" y1="0" x2="1" y2="1"><stop offset="0" stop-color="#f6da86"/><stop offset="0.6" stop-color="#f4d074"/><stop offset="1" stop-color="#f0c45e"/></linearGradient></defs><rect x="0.5" y="0" width="20" height="30.5" fill="url(#fb6056)"/><polygon points="0,0.5 7.6,3.2 7.6,34 0,30.8" fill="#f9e4a8"/><polygon points="6.2,2.7 7.8,3.3 7.8,34 6.2,33.4" fill="#e9c668"/></svg>
<svg style="position:absolute;left:370px;top:283.4px;" width="22" height="35" viewBox="0 0 22 35"><defs><linearGradient id="fb3983" x1="0" y1="0" x2="1" y2="1"><stop offset="0" stop-color="#f6da86"/><stop offset="0.6" stop-color="#f4d074"/><stop offset="1" stop-color="#f0c45e"/></linearGradient></defs><rect x="0.5" y="0" width="20" height="30.5" fill="url(#fb3983)"/><polygon points="0,0.5 7.6,3.2 7.6,34 0,30.8" fill="#f9e4a8"/><polygon points="6.2,2.7 7.8,3.3 7.8,34 6.2,33.4" fill="#e9c668"/></svg>
<svg style="position:absolute;left:582px;top:283.4px;" width="22" height="35" viewBox="0 0 22 35"><defs><linearGradient id="fb6103" x1="0" y1="0" x2="1" y2="1"><stop offset="0" stop-color="#f6da86"/><stop offset="0.6" stop-color="#f4d074"/><stop offset="1" stop-color="#f0c45e"/></linearGradient></defs><rect x="0.5" y="0" width="20" height="30.5" fill="url(#fb6103)"/><polygon points="0,0.5 7.6,3.2 7.6,34 0,30.8" fill="#f9e4a8"/><polygon points="6.2,2.7 7.8,3.3 7.8,34 6.2,33.4" fill="#e9c668"/></svg>
<svg style="position:absolute;left:370px;top:330.1px;" width="22" height="35" viewBox="0 0 22 35"><defs><linearGradient id="fb4030" x1="0" y1="0" x2="1" y2="1"><stop offset="0" stop-color="#f6da86"/><stop offset="0.6" stop-color="#f4d074"/><stop offset="1" stop-color="#f0c45e"/></linearGradient></defs><rect x="0.5" y="0" width="20" height="30.5" fill="url(#fb4030)"/><polygon points="0,0.5 7.6,3.2 7.6,34 0,30.8" fill="#f9e4a8"/><polygon points="6.2,2.7 7.8,3.3 7.8,34 6.2,33.4" fill="#e9c668"/></svg>
<svg style="position:absolute;left:378.5px;top:204.5px;" width="22" height="21" viewBox="0 0 22 21"><defs><linearGradient id="cf" x1="0" y1="0" x2="1" y2="0"><stop offset="0" stop-color="#dcf4fb"/><stop offset="1" stop-color="#78cfe8"/></linearGradient><linearGradient id="cr" x1="0" y1="0" x2="0" y2="1"><stop offset="0" stop-color="#3fa8da"/><stop offset="1" stop-color="#1d70a6"/></linearGradient></defs><polygon points="0.4,4 12.6,4 12.6,19.9 0.4,19.2" fill="url(#cf)"/><polygon points="0.4,4 7.8,0.5 21.7,1.1 12.6,4" fill="#a4e0f2"/><polygon points="12.6,4 21.7,1.1 21.7,15.2 12.6,19.9" fill="url(#cr)"/><path d="M3 7 L7 7 Q10 11.5 7 16 L3 16z" fill="#eaf8fc" opacity="0.7"/></svg>
<svg style="position:absolute;left:590.5px;top:205.5px;" width="22" height="16" viewBox="0 0 22 16"><rect x="0.5" y="0" width="21" height="15.5" fill="#3b8ee8"/><rect x="0.5" y="0" width="21" height="5" fill="#4aa0f0" opacity="0.6"/><rect x="0.5" y="14" width="21" height="1.5" fill="#2a70c8"/></svg>
<svg style="position:absolute;left:381px;top:244px;" width="18" height="24" viewBox="0 0 18 24"><rect x="0.5" y="0.5" width="17" height="23" fill="#f6f8fb" stroke="#cfd6de"/><path d="M4 3 L5.5 3 L4.5 8 L3 8z" fill="#4a80d0"/><rect x="7" y="4" width="8" height="1" fill="#c9d2dc"/><rect x="3" y="10" width="12" height="1" fill="#d5dce4"/><rect x="10" y="13" width="5" height="4" fill="#4d6070"/><rect x="3" y="13" width="5" height="1" fill="#d5dce4"/><rect x="3" y="19" width="12" height="1" fill="#d5dce4"/></svg>
<svg style="position:absolute;left:593px;top:248.5px;" width="18" height="20" viewBox="0 0 18 20"><polygon points="6,0 12.7,0 12.7,10 17.8,10 9.3,19.3 0,10 6,10" fill="#3a84e0"/></svg>
<svg style="position:absolute;left:380px;top:287.5px;" width="20" height="30" viewBox="0 0 20 30"><path d="M11 0.5 L12.8 0.5 C13.5 5 19.5 8 19 14 C18.5 17 17 19 16 20 C17 16 15.5 12 12.8 10 L12.8 24 C12.8 27.5 9 29 5.5 29 C2 29 0.5 27 1 25 C1.5 22 5 20 8 20 C9.3 20 10.3 20.3 11 20.8 Z" fill="#3a8ee6"/></svg>
<svg style="position:absolute;left:591.5px;top:298.5px;" width="21" height="15" viewBox="0 0 21 15"><defs><linearGradient id="sky" x1="0" y1="0" x2="0" y2="1"><stop offset="0" stop-color="#4f90e0"/><stop offset="0.45" stop-color="#cfe3f3"/><stop offset="1" stop-color="#e6eef2"/></linearGradient></defs><rect x="0" y="0" width="20.5" height="14.5" fill="url(#sky)"/><path d="M0 8 C5 6 9 9 13 10.5 C16 11.5 18 11 20.5 12 L20.5 14.5 L0 14.5z" fill="#3a5656"/><rect x="0" y="13" width="20.5" height="1.5" fill="#4a6aa0"/></svg>
<svg style="position:absolute;left:381.5px;top:338.5px;" width="18" height="23" viewBox="0 0 18 23"><rect x="0" y="0" width="17.5" height="22.5" fill="#2e3040"/><rect x="2" y="1.5" width="12" height="19.5" fill="#3a58c0"/><rect x="2" y="12" width="12" height="9" fill="#2c4aa8"/><rect x="2.5" y="6" width="4" height="3" fill="#d04848"/><circle cx="10" cy="7" r="2.5" fill="#b08a20"/><rect x="8" y="11" width="5" height="3" fill="#204020"/><rect x="9" y="17" width="3" height="3" fill="#e0c020"/><rect x="15" y="2" width="1.5" height="2" fill="#c8c8d0"/><rect x="15" y="6" width="1.5" height="2" fill="#c8c8d0"/><rect x="15" y="10" width="1.5" height="2" fill="#c8c8d0"/><rect x="15" y="14" width="1.5" height="2" fill="#c8c8d0"/><rect x="15" y="18" width="1.5" height="2" fill="#c8c8d0"/></svg>
<svg style="position:absolute;left:364.5px;top:417px;" width="35" height="16" viewBox="0 0 35 16"><polygon points="0.5,6 14.5,0 34,4.5 19.5,10" fill="#ececec"/><polygon points="19.5,10 34,4.5 34,9.5 19.5,15" fill="#cfcfcf"/><polygon points="0.5,6 19.5,10 19.5,15 0.5,11" fill="#8a8a8a"/><polygon points="1.8,7.2 18,10.6 18,13.6 1.8,10.2" fill="#262626"/><rect x="16" y="11" width="1.2" height="1.6" fill="#aaa"/></svg>
<svg style="position:absolute;left:364.5px;top:462px;" width="35" height="16" viewBox="0 0 35 16"><polygon points="0.5,6 14.5,0 34,4.5 19.5,10" fill="#ececec"/><polygon points="19.5,10 34,4.5 34,9.5 19.5,15" fill="#cfcfcf"/><polygon points="0.5,6 19.5,10 19.5,15 0.5,11" fill="#8a8a8a"/><polygon points="1.8,7.2 18,10.6 18,13.6 1.8,10.2" fill="#262626"/><rect x="16" y="11" width="1.2" height="1.6" fill="#aaa"/></svg>
<svg style="position:absolute;left:576px;top:416px;" width="35" height="16" viewBox="0 0 35 16"><polygon points="0.5,6 14.5,0 34,4.5 19.5,10" fill="#ececec"/><polygon points="19.5,10 34,4.5 34,9.5 19.5,15" fill="#cfcfcf"/><polygon points="0.5,6 19.5,10 19.5,15 0.5,11" fill="#8a8a8a"/><polygon points="1.8,7.2 18,10.6 18,13.6 1.8,10.2" fill="#262626"/><rect x="16" y="11" width="1.2" height="1.6" fill="#aaa"/></svg>
<svg style="position:absolute;left:576px;top:463px;" width="35" height="16" viewBox="0 0 35 16"><polygon points="0.5,6 14.5,0 34,4.5 19.5,10" fill="#ececec"/><polygon points="19.5,10 34,4.5 34,9.5 19.5,15" fill="#cfcfcf"/><polygon points="0.5,6 19.5,10 19.5,15 0.5,11" fill="#8a8a8a"/><polygon points="1.8,7.2 18,10.6 18,13.6 1.8,10.2" fill="#262626"/><rect x="16" y="11" width="1.2" height="1.6" fill="#aaa"/></svg>
<svg style="position:absolute;left:383px;top:401px;" width="17" height="17" viewBox="0 0 17 17"><rect x="0" y="0" width="16.5" height="16.5" rx="0.8" fill="#55555d"/><rect x="2.5" y="1.2" width="11" height="7" fill="#e4e4ea"/><rect x="3.5" y="10.5" width="8.5" height="5.5" fill="#d4d4d8"/><rect x="5" y="11.5" width="2" height="3.5" fill="#55555d"/></svg>
<svg style="position:absolute;left:576.5px;top:405px;" width="15" height="15" viewBox="0 0 15 15"><polygon points="0,1.5 6.8,0.6 6.8,6.8 0,6.8" fill="#3ab2f0"/><polygon points="7.6,0.5 14.5,0 14.5,6.8 7.6,6.8" fill="#3ab2f0"/><polygon points="0,7.6 6.8,7.6 6.8,13.6 0,12.8" fill="#3ab2f0"/><polygon points="7.6,7.6 14.5,7.6 14.5,14.5 7.6,13.7" fill="#3ab2f0"/></svg>
<svg style="position:absolute;left:588px;top:446px;" width="22" height="20" viewBox="0 0 22 20"><defs><radialGradient id="dg" cx="0.4" cy="0.35" r="0.7"><stop offset="0" stop-color="#f4f6f6"/><stop offset="1" stop-color="#b8bcbe"/></radialGradient></defs><circle cx="11.5" cy="9.5" r="9.3" fill="url(#dg)"/></svg>
<svg style="position:absolute;left:591px;top:459px;" width="19" height="9" viewBox="0 0 19 9"><rect x="0" y="0" width="18.5" height="8.5" rx="2" fill="#222"/><text x="9.25" y="7.2" font-family="Liberation Sans" font-size="7.6" font-weight="bold" fill="#fff" text-anchor="middle" textLength="15" lengthAdjust="spacingAndGlyphs">DVD</text></svg>
<svg style="position:absolute;left:224px;top:82px;" width="14" height="12" viewBox="0 0 14 12"><g transform="scale(1.0)"><polygon points="3.2,0.3 11.8,1.6 12.2,7.6 3.6,7.2" fill="#4c9fe6"/><polygon points="3.2,0.3 11.8,1.6 11.9,3.2 3.3,2" fill="#7dbff2"/><polygon points="11.8,1.6 12.8,2.6 13,8.4 12.2,7.6" fill="#2c68ae"/><polygon points="3.6,7.2 12.2,7.6 13,8.4 4.4,8.1" fill="#3a78c0"/><polygon points="0,9.6 4.2,8.2 11.4,9.2 7.2,10.9" fill="#d6dae2"/><polygon points="0,9.6 7.2,10.9 7,11.4 0.2,10.2" fill="#e8c4a8"/></g></svg>
<div style="position:absolute;left:242px;top:83px;width:1px;height:9px;background:#c8c8c8"></div>
<svg style="position:absolute;left:252px;top:82.5px;" width="11" height="12" viewBox="0 0 11 12"><path d="M0.5 0.5 L7 0.5 L9.5 3 L9.5 11.3 L0.5 11.3z" fill="#faf6f2" stroke="#dcd2ca"/><path d="M2.3 6 L4.3 8.2 L8 4" fill="none" stroke="#c4a890" stroke-width="1.1"/></svg>
<svg style="position:absolute;left:271px;top:82.5px;" width="8" height="11" viewBox="0 0 8 11"><rect x="0" y="0" width="7.2" height="11" fill="#dfe6f2"/><rect x="3.2" y="0" width="0.8" height="11" fill="#c8d2e2"/></svg>
<svg style="position:absolute;left:287px;top:85px;" width="8" height="8" viewBox="0 0 8 8"><rect x="0.5" y="0.5" width="6" height="1.2" fill="#333"/><polygon points="0.5,3 6.5,3 3.5,7" fill="#333"/></svg>
<div style="position:absolute;left:300px;top:83px;width:1px;height:10px;background:#c8c8c8"></div>
<div style="position:absolute;left:768px;top:87.5px;width:9px;height:1px;background:#222"></div>
<div style="position:absolute;left:806px;top:83px;width:7px;height:7px;border:1px solid #222"></div>
<svg style="position:absolute;left:844px;top:83px;" width="10" height="10" viewBox="0 0 10 10"><path d="M0.5 0.5 L9 9 M9 0.5 L0.5 9" stroke="#222" stroke-width="1"/></svg>
<svg style="position:absolute;left:836px;top:107px;" width="9" height="6" viewBox="0 0 9 6"><path d="M0.8 0.8 L4.3 4.3 L7.8 0.8" fill="none" stroke="#a8a8a8" stroke-width="1.2"/></svg>
<svg style="position:absolute;left:851px;top:103px;" width="15" height="15" viewBox="0 0 15 15"><circle cx="7.3" cy="7" r="6.7" fill="#2a5db0"/><circle cx="7.3" cy="7" r="5.6" fill="#3569bd"/><text x="7.3" y="11" font-family="Liberation Sans" font-weight="bold" font-size="11" fill="#fff" text-anchor="middle">?</text></svg>
<svg style="position:absolute;left:226px;top:132px;" width="12" height="11" viewBox="0 0 12 11"><path d="M10.5 5.5 L1 5.5 M5.5 1 L1 5.5 L5.5 10" fill="none" stroke="#6e6e6e" stroke-width="1.2"/></svg>
<svg style="position:absolute;left:250px;top:132px;" width="12" height="11" viewBox="0 0 12 11"><path d="M0.8 5.5 L10.3 5.5 M5.8 1 L10.3 5.5 L5.8 10" fill="none" stroke="#6e6e6e" stroke-width="1.2"/></svg>
<svg style="position:absolute;left:272.5px;top:135px;" width="6" height="4" viewBox="0 0 6 4"><path d="M0.5 0.5 L2.7 2.8 L5 0.5" fill="none" stroke="#8a8a8a" stroke-width="1"/></svg>
<svg style="position:absolute;left:286.5px;top:133px;" width="12" height="11" viewBox="0 0 12 11"><path d="M5.8 10.5 L5.8 1 M1 5.8 L5.8 1 L10.6 5.8" fill="none" stroke="#6e6e6e" stroke-width="1.2"/></svg>
<svg style="position:absolute;left:306px;top:131px;" width="14" height="12" viewBox="0 0 14 12"><g transform="scale(1.0)"><polygon points="3.2,0.3 11.8,1.6 12.2,7.6 3.6,7.2" fill="#4c9fe6"/><polygon points="3.2,0.3 11.8,1.6 11.9,3.2 3.3,2" fill="#7dbff2"/><polygon points="11.8,1.6 12.8,2.6 13,8.4 12.2,7.6" fill="#2c68ae"/><polygon points="3.6,7.2 12.2,7.6 13,8.4 4.4,8.1" fill="#3a78c0"/><polygon points="0,9.6 4.2,8.2 11.4,9.2 7.2,10.9" fill="#d6dae2"/><polygon points="0,9.6 7.2,10.9 7,11.4 0.2,10.2" fill="#e8c4a8"/></g></svg>
<svg style="position:absolute;left:324.5px;top:135.5px;" width="5" height="6" viewBox="0 0 5 6"><path d="M0.8 0.5 L3.3 2.8 L0.8 5.2" fill="none" stroke="#777" stroke-width="1"/></svg>
<svg style="position:absolute;left:376px;top:135.5px;" width="5" height="6" viewBox="0 0 5 6"><path d="M0.8 0.5 L3.3 2.8 L0.8 5.2" fill="none" stroke="#777" stroke-width="1"/></svg>
<svg style="position:absolute;left:521.5px;top:136px;" width="9" height="6" viewBox="0 0 9 6"><path d="M0.8 0.8 L4 4 L7.2 0.8" fill="none" stroke="#444" stroke-width="1.3"/></svg>
<svg style="position:absolute;left:545.5px;top:133px;" width="10" height="10" viewBox="0 0 10 10"><path d="M6.9 2.3 A3.6 3.6 0 1 1 3.2 2.1" fill="none" stroke="#555" stroke-width="1.3"/><path d="M2 0.3 L3.6 2.2 L1.6 3.8" fill="none" stroke="#555" stroke-width="1.2"/></svg>
<svg style="position:absolute;left:585px;top:132.5px;" width="12" height="11" viewBox="0 0 12 11"><circle cx="7" cy="4.2" r="3.5" fill="none" stroke="#a0a0a0" stroke-width="1"/><path d="M4.5 6.8 L0.8 10.4" stroke="#a0a0a0" stroke-width="1.2"/></svg>
<svg style="position:absolute;left:353px;top:168.5px;" width="10" height="6" viewBox="0 0 10 6"><path d="M0.6 0.6 L4.8 4.8 L9 0.6" fill="none" stroke="#8c8c8c" stroke-width="1"/></svg>
<svg style="position:absolute;left:353px;top:378.5px;" width="10" height="6" viewBox="0 0 10 6"><path d="M0.6 0.6 L4.8 4.8 L9 0.6" fill="none" stroke="#8c8c8c" stroke-width="1"/></svg>
<svg style="position:absolute;left:237.5px;top:174.5px;" width="11" height="10" viewBox="0 0 11 10"><polygon points="5.2,0 6.5,3.6 10.3,3.6 7.3,6 8.4,9.7 5.2,7.4 2,9.7 3.1,6 0,3.6 3.9,3.6" fill="#3c82dc"/></svg>
<svg style="position:absolute;left:242px;top:195px;" width="12" height="9" viewBox="0 0 12 9"><rect x="0" y="0" width="12" height="8.3" fill="#3a8ee8"/><rect x="0" y="7" width="12" height="1.3" fill="#2a74cc"/></svg>
<svg style="position:absolute;left:243px;top:213.5px;" width="11" height="11" viewBox="0 0 11 11"><polygon points="3.4,0 6.9,0 6.9,5 10.3,5 5.15,10.5 0,5 3.4,5" fill="#3b86e2"/></svg>
<svg style="position:absolute;left:334px;top:195px;" width="8" height="8" viewBox="0 0 8 8"><path d="M4.2 0.5 L7.5 3.8 L6.2 4.3 L4.3 6.2 L4.6 7.3 L0.6 3.3 L1.8 3.6 L3.7 1.7z M2.3 5.3 L0.3 7.5" fill="#8a8a8a" stroke="#8a8a8a" stroke-width="0.5"/></svg>
<svg style="position:absolute;left:334px;top:215px;" width="8" height="8" viewBox="0 0 8 8"><path d="M4.2 0.5 L7.5 3.8 L6.2 4.3 L4.3 6.2 L4.6 7.3 L0.6 3.3 L1.8 3.6 L3.7 1.7z M2.3 5.3 L0.3 7.5" fill="#8a8a8a" stroke="#8a8a8a" stroke-width="0.5"/></svg>
<svg style="position:absolute;left:334px;top:235px;" width="8" height="8" viewBox="0 0 8 8"><path d="M4.2 0.5 L7.5 3.8 L6.2 4.3 L4.3 6.2 L4.6 7.3 L0.6 3.3 L1.8 3.6 L3.7 1.7z M2.3 5.3 L0.3 7.5" fill="#8a8a8a" stroke="#8a8a8a" stroke-width="0.5"/></svg>
<svg style="position:absolute;left:334px;top:255px;" width="8" height="8" viewBox="0 0 8 8"><path d="M4.2 0.5 L7.5 3.8 L6.2 4.3 L4.3 6.2 L4.6 7.3 L0.6 3.3 L1.8 3.6 L3.7 1.7z M2.3 5.3 L0.3 7.5" fill="#8a8a8a" stroke="#8a8a8a" stroke-width="0.5"/></svg>
<svg style="position:absolute;left:243px;top:232.5px;" width="10" height="12" viewBox="0 0 10 12"><rect x="0.5" y="0.5" width="9" height="11" fill="#eef1f4" stroke="#bfc4ca"/><path d="M3 2.5 L4 2.5 L3.5 5.5 L2.5 5.5z" fill="#5a88cc"/><rect x="4" y="7" width="3" height="2" fill="#666"/></svg>
<svg style="position:absolute;left:242.5px;top:254px;" width="12" height="9" viewBox="0 0 12 9"><defs><linearGradient id="nsky" x1="0" y1="0" x2="0" y2="1"><stop offset="0" stop-color="#5c9ae0"/><stop offset="0.6" stop-color="#d6e6f2"/></linearGradient></defs><rect x="0" y="0" width="11.6" height="9" fill="url(#nsky)"/><path d="M0 5 C3 4 6 6 8 6.5 C10 7 11 6.8 11.6 7 L11.6 9 L0 9z" fill="#3c5458"/></svg>
<svg style="position:absolute;left:243.5px;top:273.5px;" width="9" height="12" viewBox="0 0 9 12"><path d="M4.8 0.3 L5.9 0.3 C6.3 2.5 9.3 4 8.6 7.3 C8 5.6 7 5 5.9 4.6 L5.9 9.2 C5.9 10.8 4 11.7 2.4 11.7 C0.9 11.7 0.2 10.9 0.5 9.9 C0.8 8.9 2.3 8.2 3.6 8.2 C4.1 8.2 4.5 8.3 4.8 8.5z" fill="#3a8ee8"/></svg>
<svg style="position:absolute;left:243px;top:293px;" width="10" height="12" viewBox="0 0 10 12"><rect x="0" y="0" width="9.8" height="11.8" fill="#2e3040"/><rect x="1.4" y="1" width="6.2" height="9.8" fill="#3d62cc"/><rect x="2" y="4" width="2.2" height="2" fill="#c84a4a"/><circle cx="5.8" cy="4.8" r="1.3" fill="#a88a30"/><rect x="8.2" y="1.5" width="1" height="1.2" fill="#bbb"/><rect x="8.2" y="4.5" width="1" height="1.2" fill="#bbb"/><rect x="8.2" y="7.5" width="1" height="1.2" fill="#bbb"/></svg>
<svg style="position:absolute;left:234.5px;top:320.5px;" width="14" height="10" viewBox="0 0 14 10"><defs><linearGradient id="od" x1="0" y1="0" x2="0" y2="1"><stop offset="0" stop-color="#3d8ce4"/><stop offset="1" stop-color="#1f68c8"/></linearGradient></defs><path d="M2.8 9.5 C0.8 9.5 0 8.3 0 7.2 C0 5.8 1.1 4.8 2.5 4.8 C2.8 2.2 4.8 0.3 7.3 0.3 C9.3 0.3 10.9 1.6 11.5 3.4 C13 3.5 14 4.8 14 6.4 C14 8.2 12.8 9.5 11.2 9.5z" fill="url(#od)"/></svg>
<svg style="position:absolute;left:237px;top:347px;" width="14" height="12" viewBox="0 0 14 12"><g transform="scale(1.0)"><polygon points="3.2,0.3 11.8,1.6 12.2,7.6 3.6,7.2" fill="#4c9fe6"/><polygon points="3.2,0.3 11.8,1.6 11.9,3.2 3.3,2" fill="#7dbff2"/><polygon points="11.8,1.6 12.8,2.6 13,8.4 12.2,7.6" fill="#2c68ae"/><polygon points="3.6,7.2 12.2,7.6 13,8.4 4.4,8.1" fill="#3a78c0"/><polygon points="0,9.6 4.2,8.2 11.4,9.2 7.2,10.9" fill="#d6dae2"/><polygon points="0,9.6 7.2,10.9 7,11.4 0.2,10.2" fill="#e8c4a8"/></g></svg>
<svg style="position:absolute;left:235.5px;top:373px;" width="12" height="12" viewBox="0 0 12 12"><path d="M1 4 L6 0.8 L11.5 3 L11.5 8 L6.5 11.5 L1 9.3z" fill="#3a86dc"/><path d="M1 4 L6 0.8 L11.5 3 L6.5 6z" fill="#6cb2f0"/><path d="M0.3 5 L3 4.5 L3.5 8.5 L0.6 9z" fill="#8cc8f4" opacity="0.8"/></svg>
<svg style="position:absolute;left:830px;top:552px;" width="14" height="12" viewBox="0 0 14 12"><g fill="#a8a8a8"><rect x="0" y="0" width="1" height="11.5"/><rect x="1.5" y="0.5" width="2.5" height="2"/><rect x="1.5" y="3.5" width="2.5" height="2"/><rect x="1.5" y="6.5" width="2.5" height="2"/><rect x="1.5" y="9.5" width="2.5" height="2"/></g><g fill="#b8b8b8"><rect x="5.5" y="1" width="3" height="1"/><rect x="5.5" y="4" width="3" height="1"/><rect x="5.5" y="7" width="3" height="1"/><rect x="5.5" y="10" width="3" height="1"/><rect x="10" y="1" width="3.5" height="1"/><rect x="10" y="4" width="3.5" height="1"/><rect x="10" y="7" width="3.5" height="1"/><rect x="10" y="10" width="3.5" height="1"/></g></svg>
<svg style="position:absolute;left:849px;top:553px;" width="12" height="10" viewBox="0 0 12 10"><rect x="0.5" y="0.5" width="11" height="9" fill="#dfeaf2" stroke="#9aaabb"/><path d="M1 5.5 C4 5 7 6.8 11 7.2 L11 9.5 L1 9.5z" fill="#4a6068"/><rect x="1" y="1" width="10" height="2.5" fill="#8fb4dc" opacity="0.7"/></svg>
<svg style="position:absolute;left:13px;top:643px;" width="15" height="15" viewBox="0 0 15 15"><g fill="#fff"><polygon points="0,1.8 5.6,1.0 5.6,7.3 0,7.3"/><polygon points="6.4,0.9 14.2,0 14.2,7.3 6.4,7.3"/><polygon points="0,8.1 5.6,8.1 5.6,13.9 0,13.1"/><polygon points="6.4,8.1 14.2,8.1 14.2,14.3 6.4,14"/></g></svg>
<svg style="position:absolute;left:50px;top:643px;" width="15" height="15" viewBox="0 0 15 15"><circle cx="9.2" cy="5.4" r="4.4" fill="none" stroke="#333" stroke-width="1.3"/><path d="M6.1 8.6 L0.8 13.8" stroke="#333" stroke-width="1.5"/></svg>
<svg style="position:absolute;left:340px;top:643px;" width="14" height="14" viewBox="0 0 14 14"><circle cx="6.8" cy="6.8" r="5.6" fill="none" stroke="#e8e8e8" stroke-width="1.6"/></svg>
<svg style="position:absolute;left:379px;top:643px;" width="16" height="14" viewBox="0 0 16 14"><g fill="none" stroke="#e0e0e0" stroke-width="1.1"><path d="M0.5 0.8 L10 0.8 M0.5 12.6 L10 12.6"/><rect x="1.5" y="3" width="7.5" height="7.3"/><path d="M13.3 0 L13.3 13.6"/></g><circle cx="13.3" cy="5" r="1.4" fill="#e0e0e0"/></svg>
<svg style="position:absolute;left:419.5px;top:640px;" width="19" height="17" viewBox="0 0 19 17"><polygon points="0.3,0.8 7.5,0.8 9,3 18,3 18,16.8 0.3,16.8" fill="#e6b43a"/><rect x="0.3" y="4" width="17.7" height="12.8" fill="#f8d676"/><path d="M3.8 16.8 L3.8 11.5 Q3.8 10 5.3 10 L13 10 Q14.5 10 14.5 11.5 L14.5 16.8 L12 16.8 L12 13 L6.3 13 L6.3 16.8z" fill="#3f92dc"/><rect x="6.3" y="13" width="5.7" height="3.8" fill="#f6cc60"/></svg>
<svg style="position:absolute;left:459.5px;top:639.5px;" width="21" height="21" viewBox="0 0 21 21"><defs><linearGradient id="eg1" x1="0" y1="0" x2="1" y2="1"><stop offset="0" stop-color="#2d8ee6"/><stop offset="1" stop-color="#1756b8"/></linearGradient><linearGradient id="eg2" x1="0" y1="0" x2="1" y2="0"><stop offset="0" stop-color="#40a8e0"/><stop offset="1" stop-color="#6ad060"/></linearGradient></defs><path d="M10.5 0.5 C16 0.5 20.3 4.3 20.3 9 C20.3 12.5 17.5 14.2 14.5 14.2 C11.8 14.2 10.3 13 10.3 11.5 C10.3 10.8 10.8 10.5 11 10 C9 10 6.8 11.8 6.8 14.4 C6.8 17.5 9.5 20.3 13.5 20.3 C12.5 20.5 11.5 20.6 10.5 20.6 C4.8 20.6 0.5 16.2 0.5 10.5 C0.5 4.8 4.8 0.5 10.5 0.5z" fill="url(#eg1)"/><path d="M2.5 6 C4.5 2.5 7.5 0.5 11 0.5 C16.2 0.5 20.3 4.3 20.3 9 C20.3 12 18 14 15 14 C17 12.5 17 9 14.5 7 C11 4.5 5 4.5 2.5 6z" fill="url(#eg2)"/></svg>
<svg style="position:absolute;left:500px;top:641px;" width="19" height="19" viewBox="0 0 19 19"><defs><linearGradient id="np" x1="0" y1="0" x2="1" y2="0"><stop offset="0" stop-color="#7ab0c0"/><stop offset="0.5" stop-color="#b8dce8"/><stop offset="1" stop-color="#e8f4f8"/></linearGradient></defs><polygon points="6,0.5 17,1.5 18,17 0.5,15" fill="url(#np)"/><polygon points="14,1.2 17,1.5 18,17 15,16.5" fill="#f4f8fa"/><polygon points="0.5,15 8,13 14,18 " fill="#5890a0" opacity="0.6"/></svg>
<svg style="position:absolute;left:541px;top:640px;" width="21" height="20" viewBox="0 0 21 20"><defs><radialGradient id="pg" cx="0.5" cy="0.5" r="0.6"><stop offset="0" stop-color="#f4f4f4"/><stop offset="1" stop-color="#c8ccd4"/></radialGradient></defs><ellipse cx="9.5" cy="12" rx="9" ry="7.5" fill="url(#pg)" transform="rotate(-25 9.5 12)"/><circle cx="6" cy="11.5" r="1.6" fill="#3060b0"/><circle cx="9" cy="7.5" r="1.6" fill="#50a050"/><circle cx="13.5" cy="9" r="1.6" fill="#e09040"/><circle cx="12" cy="14.5" r="1.5" fill="#d04040"/><path d="M14 13 L19.5 2" stroke="#c08050" stroke-width="1.6"/><circle cx="19.5" cy="2" r="1.6" fill="#e89a60"/></svg>
<svg style="position:absolute;left:812.5px;top:642px;" width="17" height="17" viewBox="0 0 17 17"><defs><radialGradient id="sun" cx="0.35" cy="0.3" r="0.8"><stop offset="0" stop-color="#fff0a0"/><stop offset="0.6" stop-color="#f8c040"/><stop offset="1" stop-color="#f0a030"/></radialGradient></defs><circle cx="8.3" cy="8.1" r="8" fill="url(#sun)"/></svg>
<svg style="position:absolute;left:912.5px;top:646.5px;" width="12" height="7" viewBox="0 0 12 7"><path d="M0.8 6 L5.7 1 L10.6 6" fill="none" stroke="#e0e0e0" stroke-width="1.2"/></svg>
<svg style="position:absolute;left:931.5px;top:644px;" width="14" height="13" viewBox="0 0 14 13"><g fill="none" stroke="#e0e0e0" stroke-width="1"><rect x="3.5" y="1.5" width="10" height="7.5"/><path d="M8.5 9 L8.5 11.5 M5 12 L12 12 M1 0 L1 10 M0 10 L3 10 M1 3 L3.5 3"/></g></svg>
<svg style="position:absolute;left:951px;top:643.5px;" width="15" height="13" viewBox="0 0 15 13"><g fill="none" stroke="#e0e0e0" stroke-width="1"><path d="M0.5 4.5 L3 4.5 L6.5 1 L6.5 12 L3 8.5 L0.5 8.5z"/><path d="M8.5 4.5 C9.5 5.5 9.5 7.5 8.5 8.5"/><path d="M10.5 2.8 C12.3 4.8 12.3 8.3 10.5 10.2"/><path d="M12.5 1 C15 3.5 15 9.5 12.5 12"/></g></svg>
<svg style="position:absolute;left:1031px;top:643.5px;" width="22" height="21" viewBox="0 0 22 21"><path d="M0.5 0.5 L14.5 0.5 L14.5 10 L8 10 L4.5 13.5 L4.5 10 L0.5 10z" fill="#f4f4f4"/><g fill="#888"><rect x="3" y="3" width="9" height="1"/><rect x="3" y="5.5" width="9" height="1"/></g><circle cx="14.5" cy="14" r="6.3" fill="#2c2c30" stroke="#555" stroke-width="1"/><text x="14.5" y="17.6" font-family="Liberation Sans" font-size="9.5" fill="#fff" text-anchor="middle">1</text></svg>
<div style="position:absolute;left:1062px;top:634px;width:1px;height:33px;background:#5a5a66"></div>
<svg style="position:absolute;left:14px;top:7px;" width="34" height="38" viewBox="0 0 34 38"><defs><linearGradient id="rb" x1="0" y1="0" x2="1" y2="0"><stop offset="0" stop-color="#d4d8f0"/><stop offset="0.35" stop-color="#eceef8"/><stop offset="0.7" stop-color="#dfe2f2"/><stop offset="1" stop-color="#b8bee0"/></linearGradient></defs><path d="M1.6 5.5 L31.8 5 L27.9 35.9 L4 35.9z" fill="url(#rb)" opacity="0.72"/><path d="M4 35.9 L27.9 35.9 L28.1 34.5 L3.8 34.5z" fill="#c8cce4" opacity="0.9"/><ellipse cx="16.9" cy="4" rx="15.9" ry="2.8" fill="#f0f2fa" opacity="0.95"/><ellipse cx="16.9" cy="4.4" rx="14.5" ry="1.9" fill="#d0d4ec"/><g fill="none" stroke="#2c7cd0" stroke-width="1.8" stroke-linejoin="round"><path d="M8.3 21.5 L11 17 M12.5 15.2 L14.8 19"/><path d="M15.5 23.8 L9.5 23.8"/><path d="M13 15 L16.5 20.5"/></g><g fill="#2c7cd0"><polygon points="10,15.5 13.5,13.8 13,17.5"/><polygon points="17.8,19.5 15,22.5 14,19.5"/><polygon points="8.5,25.5 7,21.8 10.2,22.4"/></g></svg>
<span class="t" style="left:307.4px;top:84.0px;font-size:10.4px;line-height:10.4px;color:#1b1b1b;transform:scaleX(0.859);">This PC</span>
<span class="t" style="left:230.1px;top:106.0px;font-size:9.4px;line-height:9.4px;color:#ffffff;transform:scaleX(1.021);">File</span>
<span class="t" style="left:273.7px;top:106.0px;font-size:9.4px;line-height:9.4px;color:#444444;transform:scaleX(1.020);">Computer</span>
<span class="t" style="left:340.4px;top:106.0px;font-size:9.4px;line-height:9.4px;color:#444444;transform:scaleX(1.030);">View</span>
<span class="t" style="left:336.8px;top:133.0px;font-size:10.4px;line-height:10.4px;color:#1b1b1b;transform:scaleX(0.865);">This PC</span>
<span class="t" style="left:606.5px;top:133.0px;font-size:10.4px;line-height:10.4px;color:#6d6d6d;transform:scaleX(0.893);">Search This PC</span>
<span class="t" style="left:252.7px;top:175.0px;font-size:10.4px;line-height:10.4px;color:#1b1b1b;transform:scaleX(0.916);">Quick access</span>
<span class="t" style="left:258.9px;top:195.0px;font-size:10.4px;line-height:10.4px;color:#1b1b1b;transform:scaleX(0.935);">Desktop</span>
<span class="t" style="left:258.9px;top:215.0px;font-size:10.4px;line-height:10.4px;color:#1b1b1b;transform:scaleX(0.964);">Downloads</span>
<span class="t" style="left:258.9px;top:234.0px;font-size:10.4px;line-height:10.4px;color:#1b1b1b;transform:scaleX(0.975);">Documents</span>
<span class="t" style="left:258.9px;top:254.0px;font-size:10.4px;line-height:10.4px;color:#1b1b1b;transform:scaleX(0.947);">Pictures</span>
<span class="t" style="left:258.9px;top:274.0px;font-size:10.4px;line-height:10.4px;color:#1b1b1b;transform:scaleX(0.992);">Music</span>
<span class="t" style="left:259.9px;top:294.0px;font-size:10.4px;line-height:10.4px;color:#1b1b1b;transform:scaleX(0.906);">Videos</span>
<span class="t" style="left:253.1px;top:321.0px;font-size:10.4px;line-height:10.4px;color:#1b1b1b;transform:scaleX(0.914);">OneDrive</span>
<span class="t" style="left:253.1px;top:348.0px;font-size:10.4px;line-height:10.4px;color:#1b1b1b;transform:scaleX(0.827);">This PC</span>
<span class="t" style="left:252.1px;top:374.0px;font-size:10.4px;line-height:10.4px;color:#1b1b1b;transform:scaleX(0.995);">Network</span>
<span class="t" style="left:365.0px;top:166.0px;font-size:12.4px;line-height:12.4px;color:#3c4276;transform:scaleX(0.983);-webkit-text-stroke:0.1px currentColor;">Folders (7)</span>
<span class="t" style="left:406.8px;top:194.0px;font-size:10.4px;line-height:10.4px;color:#1b1b1b;transform:scaleX(0.934);">3D Objects</span>
<span class="t" style="left:618.4px;top:194.0px;font-size:10.4px;line-height:10.4px;color:#1b1b1b;transform:scaleX(0.943);">Desktop</span>
<span class="t" style="left:406.8px;top:241.0px;font-size:10.4px;line-height:10.4px;color:#1b1b1b;transform:scaleX(0.980);">Documents</span>
<span class="t" style="left:618.4px;top:240.0px;font-size:10.4px;line-height:10.4px;color:#1b1b1b;transform:scaleX(0.968);">Downloads</span>
<span class="t" style="left:406.7px;top:288.0px;font-size:10.4px;line-height:10.4px;color:#1b1b1b;transform:scaleX(0.996);">Music</span>
<span class="t" style="left:618.4px;top:287.0px;font-size:10.4px;line-height:10.4px;color:#1b1b1b;transform:scaleX(0.947);">Pictures</span>
<span class="t" style="left:407.7px;top:334.0px;font-size:10.4px;line-height:10.4px;color:#1b1b1b;transform:scaleX(0.926);">Videos</span>
<span class="t" style="left:365.6px;top:375.0px;font-size:12.0px;line-height:12.0px;color:#3c4276;transform:scaleX(1.008);-webkit-text-stroke:0.1px currentColor;">Devices and drives (4)</span>
<span class="t" style="left:406.7px;top:403.0px;font-size:10.4px;line-height:10.4px;color:#1b1b1b;transform:scaleX(0.944);">Floppy Disk Drive (A:)</span>
<span class="t" style="left:619.1px;top:397.0px;font-size:10.4px;line-height:10.4px;color:#1b1b1b;transform:scaleX(0.934);">Windows (C:)</span>
<span class="t" style="left:619.1px;top:423.0px;font-size:10.4px;line-height:10.4px;color:#6d6d6d;transform:scaleX(0.881);">42.4 GB free of 63.5 GB</span>
<span class="t" style="left:407.7px;top:444.0px;font-size:10.4px;line-height:10.4px;color:#1b1b1b;transform:scaleX(0.925);">Temporary Storage (D:)</span>
<span class="t" style="left:406.7px;top:469.0px;font-size:10.4px;line-height:10.4px;color:#6d6d6d;transform:scaleX(0.884);">3.47 GB free of 3.99 GB</span>
<span class="t" style="left:618.1px;top:449.0px;font-size:10.4px;line-height:10.4px;color:#1b1b1b;transform:scaleX(0.894);">DVD Drive (E:)</span>
<span class="t" style="left:226.8px;top:555.0px;font-size:10.4px;line-height:10.4px;color:#1b1b1b;transform:scaleX(0.946);">11 items</span>
<span class="t" style="left:74.3px;top:645.0px;font-size:12.3px;line-height:12.3px;color:#4a4a4a;transform:scaleX(0.977);-webkit-text-stroke:0.1px currentColor;">Type here to search</span>
<span class="t" style="left:837.0px;top:646.0px;font-size:11.2px;line-height:11.2px;color:#ffffff;transform:scaleX(1.000);-webkit-text-stroke:0;">62°F</span>
<span class="t" style="left:866.8px;top:646.0px;font-size:11.2px;line-height:11.2px;color:#ffffff;transform:scaleX(0.994);-webkit-text-stroke:0;">Sunny</span>
<span class="t" style="left:976.2px;top:638.0px;font-size:10.4px;line-height:10.4px;color:#ffffff;transform:scaleX(0.947);-webkit-text-stroke:0;">9:37 AM</span>
<span class="t" style="left:975.8px;top:653.0px;font-size:10.4px;line-height:10.4px;color:#ffffff;transform:scaleX(0.935);-webkit-text-stroke:0;">8/3/2021</span>
<span class="t" style="left:5.6px;top:50.0px;font-size:9.6px;line-height:9.6px;color:#ffffff;transform:scaleX(0.986);text-shadow:0 0 1px #000,0 1px 1px #000,1px 0 1px #000,-1px 0 1px #000;-webkit-text-stroke:0.3px #fff;">Recycle Bin</span>
</div></body></html>
